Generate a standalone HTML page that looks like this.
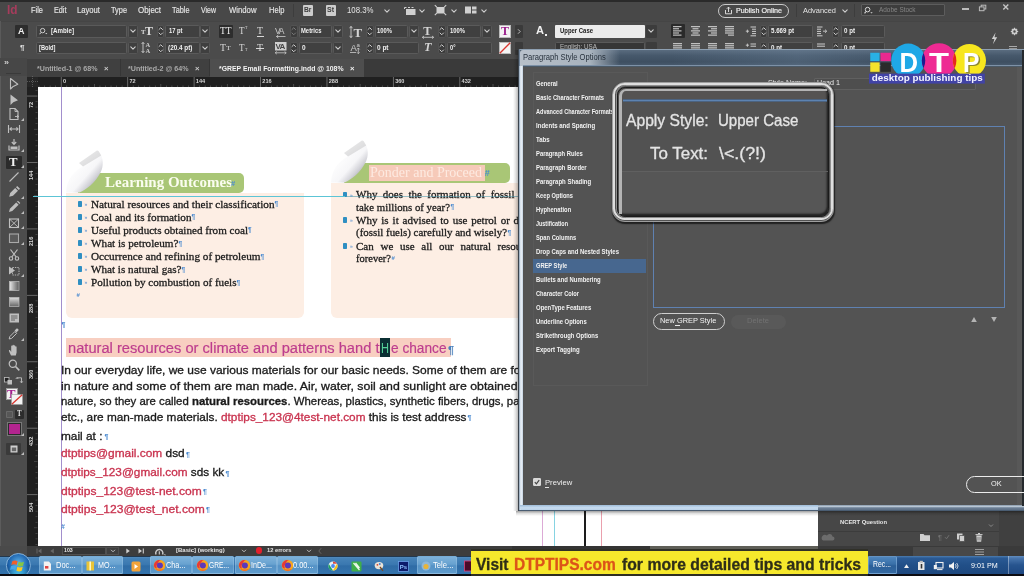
<!DOCTYPE html>
<html lang="en"><head><meta charset="utf-8"><title>GREP Email Formatting.indd - Paragraph Style Options</title>
<style>
html,body{margin:0;padding:0}
body{width:1024px;height:576px;overflow:hidden;position:relative;background:#4a4a4a;font-family:"Liberation Sans",sans-serif}
#r{filter:blur(0.45px);position:absolute;left:0;top:0;width:1024px;height:576px;overflow:hidden}
#r div,#r span,#r svg{position:absolute}
.t{white-space:nowrap;transform-origin:0 50%;display:block}
.c{overflow:hidden}
</style></head>
<body><div id="r">
<div style="left:0px;top:0px;width:1024px;height:576px;background:#4a4a4a;"></div>
<div style="left:0px;top:0px;width:1024px;height:21px;background:#484848;"></div>
<div style="left:0px;top:0px;width:1024px;height:1.5px;background:#2a2a2a;"></div>
<div style="left:0px;top:21px;width:1024px;height:38px;background:#4b4b4b;"></div>
<div style="left:0px;top:20.5px;width:1024px;height:1px;background:#454545;"></div>
<div style="left:0px;top:21px;width:1.2px;height:38px;background:#5a5a5a;"></div>
<div style="left:0px;top:59px;width:1024px;height:18px;background:#3a3a3a;"></div>
<div style="left:37px;top:87px;width:483px;height:459px;background:#ffffff;"></div>
<span class="t" style="transform:scaleX(0.9451);left:6.5px;top:2.2px;font-size:12.5px;line-height:16.2px;color:#a63c5c;font-family:'Liberation Sans', sans-serif;font-weight:700;">Id</span>
<span class="t" style="transform:scaleX(0.9089);left:31px;top:5.85px;font-size:8.2px;line-height:10.7px;color:#e4e4e4;font-family:'Liberation Sans', sans-serif;-webkit-text-stroke-width:0.15px;">File</span>
<span class="t" style="transform:scaleX(0.8859);left:53.5px;top:5.85px;font-size:8.2px;line-height:10.7px;color:#e4e4e4;font-family:'Liberation Sans', sans-serif;-webkit-text-stroke-width:0.15px;">Edit</span>
<span class="t" style="transform:scaleX(0.9352);left:77px;top:5.85px;font-size:8.2px;line-height:10.7px;color:#e4e4e4;font-family:'Liberation Sans', sans-serif;-webkit-text-stroke-width:0.15px;">Layout</span>
<span class="t" style="transform:scaleX(0.9014);left:111px;top:5.85px;font-size:8.2px;line-height:10.7px;color:#e4e4e4;font-family:'Liberation Sans', sans-serif;-webkit-text-stroke-width:0.15px;">Type</span>
<span class="t" style="transform:scaleX(0.9716);left:138px;top:5.85px;font-size:8.2px;line-height:10.7px;color:#e4e4e4;font-family:'Liberation Sans', sans-serif;-webkit-text-stroke-width:0.15px;">Object</span>
<span class="t" style="transform:scaleX(0.8939);left:171.5px;top:5.85px;font-size:8.2px;line-height:10.7px;color:#e4e4e4;font-family:'Liberation Sans', sans-serif;-webkit-text-stroke-width:0.15px;">Table</span>
<span class="t" style="transform:scaleX(0.8518);left:201px;top:5.85px;font-size:8.2px;line-height:10.7px;color:#e4e4e4;font-family:'Liberation Sans', sans-serif;-webkit-text-stroke-width:0.15px;">View</span>
<span class="t" style="transform:scaleX(0.9442);left:228.5px;top:5.85px;font-size:8.2px;line-height:10.7px;color:#e4e4e4;font-family:'Liberation Sans', sans-serif;-webkit-text-stroke-width:0.15px;">Window</span>
<span class="t" style="transform:scaleX(0.9202);left:268.5px;top:5.85px;font-size:8.2px;line-height:10.7px;color:#e4e4e4;font-family:'Liberation Sans', sans-serif;-webkit-text-stroke-width:0.15px;">Help</span>
<div style="left:293px;top:4px;width:1px;height:13px;background:#3d3d3d;"></div>
<div style="left:302.5px;top:5px;width:10.5px;height:10.5px;background:#cdcdcd;border-radius:1px;"></div>
<span class="t" style="transform:scaleX(1.0367);left:304px;top:6.15px;font-size:6.5px;line-height:8.5px;color:#3c3c3c;font-family:'Liberation Sans', sans-serif;font-weight:700;">Br</span>
<div style="left:325.5px;top:5px;width:10.5px;height:10.5px;background:#cdcdcd;border-radius:1px;"></div>
<span class="t" style="transform:scaleX(1.0769);left:327.3px;top:6.15px;font-size:6.5px;line-height:8.5px;color:#3c3c3c;font-family:'Liberation Sans', sans-serif;font-weight:700;">St</span>
<span class="t" style="transform:scaleX(0.9539);left:346.5px;top:5.65px;font-size:8.2px;line-height:10.7px;color:#e4e4e4;font-family:'Liberation Sans', sans-serif;">108.3%</span>
<svg style="left:382.5px;top:7.5px;" width="8" height="6" viewBox="0 0 8 6"><path d="M1.7999999999999998 1.9 L4 4.1 L6.2 1.9" fill="none" stroke="#cfcfcf" stroke-width="1.1" stroke-linecap="round" stroke-linejoin="round"/></svg>
<svg style="left:403px;top:4px;" width="14" height="12" viewBox="0 0 14 12"><path d="M1.5 3.5h2M5 3.5h2M8.5 3.5h2M1.5 3.5v1.5" stroke="#d0d0d0" stroke-width="1" fill="none"/><rect x="3" y="5" width="9.5" height="6" fill="#d0d0d0"/></svg>
<svg style="left:418px;top:7.5px;" width="8" height="6" viewBox="0 0 8 6"><path d="M1.7999999999999998 1.9 L4 4.1 L6.2 1.9" fill="none" stroke="#cfcfcf" stroke-width="1.1" stroke-linecap="round" stroke-linejoin="round"/></svg>
<svg style="left:434px;top:4px;" width="13" height="12" viewBox="0 0 13 12"><rect x="2.5" y="3" width="8" height="6.5" fill="#d0d0d0"/><path d="M0.8 1.2l2 2M12.2 1.2l-2 2M0.8 11.2l2-2M12.2 11.2l-2-2" stroke="#d0d0d0" stroke-width="1.1"/></svg>
<svg style="left:449.5px;top:7.5px;" width="8" height="6" viewBox="0 0 8 6"><path d="M1.7999999999999998 1.9 L4 4.1 L6.2 1.9" fill="none" stroke="#cfcfcf" stroke-width="1.1" stroke-linecap="round" stroke-linejoin="round"/></svg>
<svg style="left:464px;top:4px;" width="14" height="12" viewBox="0 0 14 12"><rect x="1" y="2.5" width="6" height="7" fill="#d0d0d0"/><rect x="8" y="2.5" width="4.5" height="3" fill="#d0d0d0"/><rect x="8" y="6.5" width="4.5" height="3" fill="#d0d0d0"/></svg>
<svg style="left:479.5px;top:7.5px;" width="8" height="6" viewBox="0 0 8 6"><path d="M1.7999999999999998 1.9 L4 4.1 L6.2 1.9" fill="none" stroke="#cfcfcf" stroke-width="1.1" stroke-linecap="round" stroke-linejoin="round"/></svg>
<div style="left:717.5px;top:3.5px;width:71px;height:14.5px;box-sizing:border-box;border:1px solid #c9c9c9;border-radius:8px;"></div>
<svg style="left:724px;top:6px;" width="9" height="9" viewBox="0 0 9 9"><path d="M1.5 4v3.8h6V4M4.5 6V1.2M2.8 2.8L4.5 1.1 6.2 2.8" fill="none" stroke="#e8e8e8" stroke-width="0.9"/></svg>
<span class="t" style="transform:scaleX(0.9394);left:736px;top:6.05px;font-size:7.6px;line-height:9.9px;color:#f0f0f0;font-family:'Liberation Sans', sans-serif;-webkit-text-stroke-width:0.2px;">Publish Online</span>
<div style="left:796px;top:4px;width:1px;height:13px;background:#3d3d3d;"></div>
<span class="t" style="transform:scaleX(0.9271);left:803px;top:5.8px;font-size:8px;line-height:10.4px;color:#e4e4e4;font-family:'Liberation Sans', sans-serif;">Advanced</span>
<svg style="left:841px;top:8px;" width="8" height="6" viewBox="0 0 8 6"><path d="M1.7999999999999998 1.9 L4 4.1 L6.2 1.9" fill="none" stroke="#cfcfcf" stroke-width="1.1" stroke-linecap="round" stroke-linejoin="round"/></svg>
<div style="left:854px;top:4px;width:1px;height:13px;background:#3d3d3d;"></div>
<div style="left:861px;top:4px;width:84px;height:11.5px;background:#3d3d3d;box-sizing:border-box;border:1px solid #5d5d5d;border-radius:1px;"></div>
<svg style="left:864px;top:5.5px;" width="10" height="9" viewBox="0 0 10 9"><circle cx="3.6" cy="3.6" r="2.3" fill="none" stroke="#d8d8d8" stroke-width="1"/><path d="M1.8 5.6L0.6 7.4" stroke="#d8d8d8" stroke-width="1.1"/><path d="M6.3 6.3h2.4l-1.2 1.3z" fill="#d8d8d8"/></svg>
<span class="t" style="transform:scaleX(0.9762);left:879px;top:5.7px;font-size:6.6px;line-height:8.6px;color:#858585;font-family:'Liberation Sans', sans-serif;">Adobe Stock</span>
<div style="left:962px;top:8.3px;width:6.5px;height:1.8px;background:#bcbcbc;"></div>
<svg style="left:978px;top:3.5px;" width="10" height="9" viewBox="0 0 10 9"><rect x="3.2" y="1.2" width="4.6" height="3.8" fill="none" stroke="#bcbcbc" stroke-width="1"/><rect x="1.4" y="2.9" width="4.6" height="3.8" fill="#484848" stroke="#bcbcbc" stroke-width="1"/></svg>
<svg style="left:1001px;top:3px;" width="10" height="9" viewBox="0 0 10 9"><path d="M2.3 1.6L7.3 6.6M7.3 1.6L2.3 6.6" stroke="#c6c6c6" stroke-width="1.4"/></svg>
<div style="left:14.5px;top:24.5px;width:13.5px;height:13.5px;background:#2d2d2d;border-radius:1px;"></div>
<span class="t" style="transform:scaleX(0.9455);left:18px;top:25.15px;font-size:9.5px;line-height:12.3px;color:#f0f0f0;font-family:'Liberation Sans', sans-serif;font-weight:700;">A</span>
<span class="t" style="transform:scaleX(1.0105);left:19.5px;top:42.6px;font-size:8px;line-height:10.4px;color:#e0e0e0;font-family:'Liberation Sans', sans-serif;font-weight:700;">¶</span>
<div style="left:36px;top:25px;width:90.5px;height:12.5px;background:#404040;box-sizing:border-box;border:1px solid #5a5a5a;border-radius:1.5px;"></div>
<svg style="left:39px;top:27px;" width="10" height="9" viewBox="0 0 10 9"><circle cx="3.6" cy="3.6" r="2.2" fill="none" stroke="#d8d8d8" stroke-width="0.9"/><path d="M1.9 5.5L0.7 7.2" stroke="#d8d8d8" stroke-width="1"/><path d="M6.2 6.0h2.2l-1.1 1.2z" fill="#d8d8d8"/></svg>
<span class="t" style="transform:scaleX(0.9665);left:51px;top:27.05px;font-size:6.4px;line-height:8.3px;color:#f0f0f0;font-family:'Liberation Sans', sans-serif;font-weight:700;">[Amble]</span>
<div style="left:127.5px;top:25px;width:10px;height:12.5px;background:#3f3f3f;box-sizing:border-box;border:1px solid #565656;border-radius:1.5px;"></div>
<svg style="left:128.5px;top:28.25px;" width="8" height="6" viewBox="0 0 8 6"><path d="M1.7999999999999998 1.9 L4 4.1 L6.2 1.9" fill="none" stroke="#cfcfcf" stroke-width="1.1" stroke-linecap="round" stroke-linejoin="round"/></svg>
<div style="left:36px;top:41.5px;width:90.5px;height:12.5px;background:#404040;box-sizing:border-box;border:1px solid #5a5a5a;border-radius:1.5px;"></div>
<span class="t" style="transform:scaleX(0.8934);left:39px;top:43.55px;font-size:6.4px;line-height:8.3px;color:#f0f0f0;font-family:'Liberation Sans', sans-serif;font-weight:700;">[Bold]</span>
<div style="left:127.5px;top:41.5px;width:10px;height:12.5px;background:#3f3f3f;box-sizing:border-box;border:1px solid #565656;border-radius:1.5px;"></div>
<svg style="left:128.5px;top:44.75px;" width="8" height="6" viewBox="0 0 8 6"><path d="M1.7999999999999998 1.9 L4 4.1 L6.2 1.9" fill="none" stroke="#cfcfcf" stroke-width="1.1" stroke-linecap="round" stroke-linejoin="round"/></svg>
<span class="t" style="transform:scaleX(0.9632);left:141px;top:28.45px;font-size:7px;line-height:9.1px;color:#ddd;font-family:'Liberation Serif', serif;font-weight:700;">T</span>
<span class="t" style="transform:scaleX(0.9981);left:145px;top:23.7px;font-size:12px;line-height:15.6px;color:#ddd;font-family:'Liberation Serif', serif;font-weight:700;">T</span>
<div style="left:156.5px;top:25px;width:7.5px;height:12.5px;background:#3c3c3c;box-sizing:border-box;border:1px solid #525252;border-radius:2px;"></div>
<svg style="left:156.5px;top:25px;" width="7.5" height="12.5" viewBox="0 0 7.5 12.5"><path d="M1.95 4.55 L3.75 2.75 L5.55 4.55 M1.95 7.95 L3.75 9.75 L5.55 7.95" fill="none" stroke="#cfcfcf" stroke-width="1" stroke-linecap="round" stroke-linejoin="round"/></svg>
<div style="left:165px;top:25px;width:34.5px;height:12.5px;background:#404040;box-sizing:border-box;border:1px solid #5a5a5a;border-radius:1.5px;"></div>
<span class="t" style="transform:scaleX(0.9047);left:169px;top:27.05px;font-size:6.4px;line-height:8.3px;color:#f0f0f0;font-family:'Liberation Sans', sans-serif;font-weight:700;">17 pt</span>
<div style="left:200px;top:25px;width:10px;height:12.5px;background:#3f3f3f;box-sizing:border-box;border:1px solid #565656;border-radius:1.5px;"></div>
<svg style="left:201.0px;top:28.25px;" width="8" height="6" viewBox="0 0 8 6"><path d="M1.7999999999999998 1.9 L4 4.1 L6.2 1.9" fill="none" stroke="#cfcfcf" stroke-width="1.1" stroke-linecap="round" stroke-linejoin="round"/></svg>
<svg style="left:141px;top:41px;" width="13" height="13" viewBox="0 0 13 13"><path d="M2 1.5v10M0.6 3L2 1.3 3.4 3M0.6 10L2 11.7 3.4 10" stroke="#ccc" stroke-width="0.9" fill="none"/><text x="4.6" y="6.3" font-size="6.5" font-weight="700" fill="#ccc" font-family="Liberation Serif,serif">A</text><text x="4.6" y="12" font-size="6.5" font-weight="700" fill="#ccc" font-family="Liberation Serif,serif">A</text></svg>
<div style="left:156.5px;top:41.5px;width:7.5px;height:12.5px;background:#3c3c3c;box-sizing:border-box;border:1px solid #525252;border-radius:2px;"></div>
<svg style="left:156.5px;top:41.5px;" width="7.5" height="12.5" viewBox="0 0 7.5 12.5"><path d="M1.95 4.55 L3.75 2.75 L5.55 4.55 M1.95 7.95 L3.75 9.75 L5.55 7.95" fill="none" stroke="#cfcfcf" stroke-width="1" stroke-linecap="round" stroke-linejoin="round"/></svg>
<div style="left:165px;top:41.5px;width:34.5px;height:12.5px;background:#404040;box-sizing:border-box;border:1px solid #5a5a5a;border-radius:1.5px;"></div>
<span class="t" style="transform:scaleX(0.9994);left:168px;top:43.55px;font-size:6.4px;line-height:8.3px;color:#f0f0f0;font-family:'Liberation Sans', sans-serif;font-weight:700;">(20.4 pt)</span>
<div style="left:200px;top:41.5px;width:10px;height:12.5px;background:#3f3f3f;box-sizing:border-box;border:1px solid #565656;border-radius:1.5px;"></div>
<svg style="left:201.0px;top:44.75px;" width="8" height="6" viewBox="0 0 8 6"><path d="M1.7999999999999998 1.9 L4 4.1 L6.2 1.9" fill="none" stroke="#cfcfcf" stroke-width="1.1" stroke-linecap="round" stroke-linejoin="round"/></svg>
<div style="left:218.5px;top:24.5px;width:14.5px;height:13.5px;background:#2d2d2d;border-radius:1px;"></div>
<span class="t" style="transform:scaleX(0.9906);left:220px;top:25.15px;font-size:9.5px;line-height:12.3px;color:#f0f0f0;font-family:'Liberation Serif', serif;">TT</span>
<span class="t" style="transform:scaleX(0.9462);left:239px;top:25.15px;font-size:9.5px;line-height:12.3px;color:#d8d8d8;font-family:'Liberation Serif', serif;">T</span>
<span class="t" style="transform:scaleX(0.8727);left:244.6px;top:25.25px;font-size:4.5px;line-height:5.9px;color:#d8d8d8;font-family:'Liberation Serif', serif;">T</span>
<span class="t" style="transform:scaleX(1.0323);left:257px;top:25.15px;font-size:9.5px;line-height:12.3px;color:#d8d8d8;font-family:'Liberation Serif', serif;">T</span>
<div style="left:257px;top:36px;width:6.5px;height:0.8px;background:#d8d8d8;"></div>
<span class="t" style="transform:scaleX(1.0323);left:220px;top:41.65px;font-size:9.5px;line-height:12.3px;color:#d8d8d8;font-family:'Liberation Serif', serif;">T</span>
<span class="t" style="transform:scaleX(1.1212);left:226px;top:44.25px;font-size:7px;line-height:9.1px;color:#d8d8d8;font-family:'Liberation Serif', serif;">T</span>
<span class="t" style="transform:scaleX(0.9462);left:239px;top:41.65px;font-size:9.5px;line-height:12.3px;color:#d8d8d8;font-family:'Liberation Serif', serif;">T</span>
<span class="t" style="transform:scaleX(0.8727);left:244.6px;top:47.45px;font-size:4.5px;line-height:5.9px;color:#d8d8d8;font-family:'Liberation Serif', serif;">T</span>
<span class="t" style="transform:scaleX(1.0323);left:257px;top:41.65px;font-size:9.5px;line-height:12.3px;color:#d8d8d8;font-family:'Liberation Serif', serif;">T</span>
<div style="left:256.2px;top:47.6px;width:8px;height:0.8px;background:#d8d8d8;"></div>
<svg style="left:274px;top:24.5px;" width="14" height="14" viewBox="0 0 14 14"><text x="1" y="8.5" font-size="8.5" fill="#ccc" font-family="Liberation Sans,sans-serif" letter-spacing="-1.2">VA</text><path d="M2.5 11.5h9M4.3 10L2.5 11.5 4.3 13" stroke="#ccc" stroke-width="0.8" fill="none"/></svg>
<div style="left:290px;top:25px;width:7.5px;height:12.5px;background:#3c3c3c;box-sizing:border-box;border:1px solid #525252;border-radius:2px;"></div>
<svg style="left:290px;top:25px;" width="7.5" height="12.5" viewBox="0 0 7.5 12.5"><path d="M1.95 4.55 L3.75 2.75 L5.55 4.55 M1.95 7.95 L3.75 9.75 L5.55 7.95" fill="none" stroke="#7a7a7a" stroke-width="1" stroke-linecap="round" stroke-linejoin="round"/></svg>
<div style="left:298.5px;top:25px;width:33px;height:12.5px;background:#404040;box-sizing:border-box;border:1px solid #5a5a5a;border-radius:1.5px;"></div>
<span class="t" style="transform:scaleX(0.9156);left:301px;top:27.05px;font-size:6.4px;line-height:8.3px;color:#f0f0f0;font-family:'Liberation Sans', sans-serif;font-weight:700;">Metrics</span>
<div style="left:332.5px;top:25px;width:10px;height:12.5px;background:#3f3f3f;box-sizing:border-box;border:1px solid #565656;border-radius:1.5px;"></div>
<svg style="left:333.5px;top:28.25px;" width="8" height="6" viewBox="0 0 8 6"><path d="M1.7999999999999998 1.9 L4 4.1 L6.2 1.9" fill="none" stroke="#cfcfcf" stroke-width="1.1" stroke-linecap="round" stroke-linejoin="round"/></svg>
<svg style="left:274px;top:41px;" width="14" height="14" viewBox="0 0 14 14"><rect x="1" y="1" width="11.5" height="8.5" fill="#cfcfcf"/><text x="1.6" y="8.3" font-size="8" fill="#444" font-family="Liberation Sans,sans-serif" letter-spacing="-0.8" font-weight="700">VA</text><path d="M1.2 11.8h11M2.8 10.5L1.2 11.8 2.8 13.1M10.6 10.5l1.6 1.3-1.6 1.3" stroke="#ccc" stroke-width="0.8" fill="none"/></svg>
<div style="left:290px;top:41.5px;width:7.5px;height:12.5px;background:#3c3c3c;box-sizing:border-box;border:1px solid #525252;border-radius:2px;"></div>
<svg style="left:290px;top:41.5px;" width="7.5" height="12.5" viewBox="0 0 7.5 12.5"><path d="M1.95 4.55 L3.75 2.75 L5.55 4.55 M1.95 7.95 L3.75 9.75 L5.55 7.95" fill="none" stroke="#cfcfcf" stroke-width="1" stroke-linecap="round" stroke-linejoin="round"/></svg>
<div style="left:298.5px;top:41.5px;width:33px;height:12.5px;background:#404040;box-sizing:border-box;border:1px solid #5a5a5a;border-radius:1.5px;"></div>
<span class="t" style="transform:scaleX(1.0105);left:302px;top:43.55px;font-size:6.4px;line-height:8.3px;color:#f0f0f0;font-family:'Liberation Sans', sans-serif;font-weight:700;">0</span>
<div style="left:332.5px;top:41.5px;width:10px;height:12.5px;background:#3f3f3f;box-sizing:border-box;border:1px solid #565656;border-radius:1.5px;"></div>
<svg style="left:333.5px;top:44.75px;" width="8" height="6" viewBox="0 0 8 6"><path d="M1.7999999999999998 1.9 L4 4.1 L6.2 1.9" fill="none" stroke="#cfcfcf" stroke-width="1.1" stroke-linecap="round" stroke-linejoin="round"/></svg>
<svg style="left:349px;top:24.5px;" width="15" height="14" viewBox="0 0 15 14"><path d="M2 1.5v11M0.6 3.2L2 1.3 3.4 3.2M0.6 10.8L2 12.7 3.4 10.8" stroke="#ccc" stroke-width="0.9" fill="none"/><text x="4.5" y="12" font-size="13" font-weight="700" fill="#d4d4d4" font-family="Liberation Serif,serif">T</text></svg>
<div style="left:366px;top:25px;width:7.5px;height:12.5px;background:#3c3c3c;box-sizing:border-box;border:1px solid #525252;border-radius:2px;"></div>
<svg style="left:366px;top:25px;" width="7.5" height="12.5" viewBox="0 0 7.5 12.5"><path d="M1.95 4.55 L3.75 2.75 L5.55 4.55 M1.95 7.95 L3.75 9.75 L5.55 7.95" fill="none" stroke="#cfcfcf" stroke-width="1" stroke-linecap="round" stroke-linejoin="round"/></svg>
<div style="left:374.5px;top:25px;width:33px;height:12.5px;background:#404040;box-sizing:border-box;border:1px solid #5a5a5a;border-radius:1.5px;"></div>
<span class="t" style="transform:scaleX(0.9169);left:377px;top:27.05px;font-size:6.4px;line-height:8.3px;color:#f0f0f0;font-family:'Liberation Sans', sans-serif;font-weight:700;">100%</span>
<div style="left:408.5px;top:25px;width:10px;height:12.5px;background:#3f3f3f;box-sizing:border-box;border:1px solid #565656;border-radius:1.5px;"></div>
<svg style="left:409.5px;top:28.25px;" width="8" height="6" viewBox="0 0 8 6"><path d="M1.7999999999999998 1.9 L4 4.1 L6.2 1.9" fill="none" stroke="#cfcfcf" stroke-width="1.1" stroke-linecap="round" stroke-linejoin="round"/></svg>
<svg style="left:349px;top:41px;" width="15" height="14" viewBox="0 0 15 14"><text x="1.5" y="9.5" font-size="9.5" fill="#ccc" font-family="Liberation Sans,sans-serif">A</text><text x="7.6" y="6" font-size="6" fill="#ccc" font-family="Liberation Sans,sans-serif">a</text><path d="M9.3 7v5.5M8 8.4L9.3 7l1.3 1.4M8 11.3l1.3 1.4 1.3-1.4" stroke="#ccc" stroke-width="0.8" fill="none"/><path d="M1 11.5h6" stroke="#ccc" stroke-width="0.8"/></svg>
<div style="left:366px;top:41.5px;width:7.5px;height:12.5px;background:#3c3c3c;box-sizing:border-box;border:1px solid #525252;border-radius:2px;"></div>
<svg style="left:366px;top:41.5px;" width="7.5" height="12.5" viewBox="0 0 7.5 12.5"><path d="M1.95 4.55 L3.75 2.75 L5.55 4.55 M1.95 7.95 L3.75 9.75 L5.55 7.95" fill="none" stroke="#cfcfcf" stroke-width="1" stroke-linecap="round" stroke-linejoin="round"/></svg>
<div style="left:374.5px;top:41.5px;width:44px;height:12.5px;background:#404040;box-sizing:border-box;border:1px solid #5a5a5a;border-radius:1.5px;"></div>
<span class="t" style="transform:scaleX(1.0110);left:377px;top:43.55px;font-size:6.4px;line-height:8.3px;color:#f0f0f0;font-family:'Liberation Sans', sans-serif;font-weight:700;">0 pt</span>
<svg style="left:421px;top:24.5px;" width="15" height="14" viewBox="0 0 15 14"><text x="2.3" y="10" font-size="12.5" font-weight="700" fill="#d4d4d4" font-family="Liberation Serif,serif">T</text><path d="M1.5 12.3h11M3 11L1.3 12.3 3 13.6M11 11l1.7 1.3L11 13.6" stroke="#ccc" stroke-width="0.85" fill="none"/></svg>
<div style="left:438px;top:25px;width:7.5px;height:12.5px;background:#3c3c3c;box-sizing:border-box;border:1px solid #525252;border-radius:2px;"></div>
<svg style="left:438px;top:25px;" width="7.5" height="12.5" viewBox="0 0 7.5 12.5"><path d="M1.95 4.55 L3.75 2.75 L5.55 4.55 M1.95 7.95 L3.75 9.75 L5.55 7.95" fill="none" stroke="#cfcfcf" stroke-width="1" stroke-linecap="round" stroke-linejoin="round"/></svg>
<div style="left:447px;top:25px;width:33.5px;height:12.5px;background:#404040;box-sizing:border-box;border:1px solid #5a5a5a;border-radius:1.5px;"></div>
<span class="t" style="transform:scaleX(0.9169);left:450px;top:27.05px;font-size:6.4px;line-height:8.3px;color:#f0f0f0;font-family:'Liberation Sans', sans-serif;font-weight:700;">100%</span>
<div style="left:481.5px;top:25px;width:10px;height:12.5px;background:#3f3f3f;box-sizing:border-box;border:1px solid #565656;border-radius:1.5px;"></div>
<svg style="left:482.5px;top:28.25px;" width="8" height="6" viewBox="0 0 8 6"><path d="M1.7999999999999998 1.9 L4 4.1 L6.2 1.9" fill="none" stroke="#cfcfcf" stroke-width="1.1" stroke-linecap="round" stroke-linejoin="round"/></svg>
<span class="t" style="transform:scaleX(1.0667);left:424px;top:40.3px;font-size:11.5px;line-height:15.0px;color:#d4d4d4;font-family:'Liberation Serif', serif;font-weight:700;font-style:italic;">T</span>
<div style="left:438px;top:41.5px;width:7.5px;height:12.5px;background:#3c3c3c;box-sizing:border-box;border:1px solid #525252;border-radius:2px;"></div>
<svg style="left:438px;top:41.5px;" width="7.5" height="12.5" viewBox="0 0 7.5 12.5"><path d="M1.95 4.55 L3.75 2.75 L5.55 4.55 M1.95 7.95 L3.75 9.75 L5.55 7.95" fill="none" stroke="#cfcfcf" stroke-width="1" stroke-linecap="round" stroke-linejoin="round"/></svg>
<div style="left:447px;top:41.5px;width:44.5px;height:12.5px;background:#404040;box-sizing:border-box;border:1px solid #5a5a5a;border-radius:1.5px;"></div>
<span class="t" style="transform:scaleX(0.8980);left:450px;top:43.55px;font-size:6.4px;line-height:8.3px;color:#f0f0f0;font-family:'Liberation Sans', sans-serif;font-weight:700;">0°</span>
<div style="left:499px;top:25px;width:12px;height:12.5px;background:#f4f4f4;box-sizing:border-box;border:1px solid #bbb;"></div>
<span class="t" style="transform:scaleX(0.9981);left:501px;top:23.7px;font-size:12px;line-height:15.6px;color:#9a1f8c;font-family:'Liberation Serif', serif;font-weight:700;">T</span>
<svg style="left:499px;top:41.5px;" width="12" height="12" viewBox="0 0 12 12"><rect x="0.5" y="0.5" width="11" height="11" fill="#f4f4f4" stroke="#bbb"/><path d="M0.8 11.2L11.2 0.8" stroke="#d8362f" stroke-width="1.3"/></svg>
<div style="left:515px;top:24.5px;width:8px;height:13px;background:#3a3a3a;border-radius:1px;"></div>
<svg style="left:515px;top:24.5px;" width="8" height="13" viewBox="0 0 8 13"><path d="M3 4.3L5.2 6.5 3 8.7" fill="none" stroke="#bbb" stroke-width="1"/></svg>
<div style="left:515px;top:41.5px;width:8px;height:13px;background:#3a3a3a;border-radius:1px;"></div>
<span class="t" style="transform:scaleX(1.0535);left:536px;top:24.45px;font-size:10.5px;line-height:13.7px;color:#f0f0f0;font-family:'Liberation Sans', sans-serif;font-weight:700;">A</span>
<div style="left:545px;top:34px;width:2px;height:2px;background:#f0f0f0;"></div>
<div style="left:554.5px;top:24.5px;width:90px;height:13px;background:#ececec;border-radius:1px;"></div>
<span class="t" style="transform:scaleX(0.9135);left:559.5px;top:26.95px;font-size:6.5px;line-height:8.5px;color:#222;font-family:'Liberation Sans', sans-serif;font-weight:700;">Upper Case</span>
<div style="left:646px;top:24.5px;width:10.5px;height:13px;background:#3c3c3c;border-radius:1px;"></div>
<svg style="left:647.2px;top:28.2px;" width="8" height="6" viewBox="0 0 8 6"><path d="M1.7999999999999998 1.9 L4 4.1 L6.2 1.9" fill="none" stroke="#cfcfcf" stroke-width="1.1" stroke-linecap="round" stroke-linejoin="round"/></svg>
<div style="left:554.5px;top:41.5px;width:90px;height:12.5px;background:#363636;box-sizing:border-box;border:1px solid #5a5a5a;border-radius:1.5px;"></div>
<span class="t" style="transform:scaleX(0.9661);left:559.5px;top:43.25px;font-size:6.5px;line-height:8.5px;color:#bdbdbd;font-family:'Liberation Sans', sans-serif;">English: USA</span>
<div style="left:646px;top:41.5px;width:10.5px;height:13px;background:#3c3c3c;border-radius:1px;"></div>
<div style="left:671px;top:24px;width:13.5px;height:14px;background:#2a2a2a;border-radius:1px;"></div>
<svg style="left:671.3px;top:24px;" width="13" height="14" viewBox="0 0 13 14"><rect x="2" y="2.2" width="8.5" height="1" fill="#dedede"/><rect x="2" y="4.300000000000001" width="6" height="1" fill="#dedede"/><rect x="2" y="6.4" width="8.5" height="1" fill="#dedede"/><rect x="2" y="8.5" width="6" height="1" fill="#dedede"/><rect x="2" y="10.600000000000001" width="8.5" height="1" fill="#dedede"/></svg>
<svg style="left:689px;top:24px;" width="13" height="14" viewBox="0 0 13 14"><rect x="2" y="2.2" width="9" height="1" fill="#dedede"/><rect x="3.5" y="4.300000000000001" width="6" height="1" fill="#dedede"/><rect x="2" y="6.4" width="9" height="1" fill="#dedede"/><rect x="3.5" y="8.5" width="6" height="1" fill="#dedede"/><rect x="2" y="10.600000000000001" width="9" height="1" fill="#dedede"/></svg>
<svg style="left:706px;top:24px;" width="13" height="14" viewBox="0 0 13 14"><rect x="2" y="2.2" width="9" height="1" fill="#dedede"/><rect x="5" y="4.300000000000001" width="6" height="1" fill="#dedede"/><rect x="2" y="6.4" width="9" height="1" fill="#dedede"/><rect x="5" y="8.5" width="6" height="1" fill="#dedede"/><rect x="2" y="10.600000000000001" width="9" height="1" fill="#dedede"/></svg>
<svg style="left:723px;top:24px;" width="13" height="14" viewBox="0 0 13 14"><rect x="2" y="2.2" width="9" height="1" fill="#dedede"/><rect x="2" y="4.300000000000001" width="9" height="1" fill="#dedede"/><rect x="2" y="6.4" width="9" height="1" fill="#dedede"/><rect x="2" y="8.5" width="9" height="1" fill="#dedede"/><rect x="5" y="10.600000000000001" width="6" height="1" fill="#dedede"/></svg>
<svg style="left:671.3px;top:41px;" width="13" height="14" viewBox="0 0 13 14"><rect x="2" y="2.2" width="9" height="1" fill="#dedede"/><rect x="2" y="4.300000000000001" width="9" height="1" fill="#dedede"/><rect x="2" y="6.4" width="9" height="1" fill="#dedede"/><rect x="2" y="8.5" width="9" height="1" fill="#dedede"/><rect x="5" y="10.600000000000001" width="6" height="1" fill="#dedede"/></svg>
<svg style="left:689px;top:41px;" width="13" height="14" viewBox="0 0 13 14"><rect x="2" y="2.2" width="9" height="1" fill="#dedede"/><rect x="2" y="4.300000000000001" width="9" height="1" fill="#dedede"/><rect x="2" y="6.4" width="9" height="1" fill="#dedede"/><rect x="2" y="8.5" width="9" height="1" fill="#dedede"/><rect x="5" y="10.600000000000001" width="6" height="1" fill="#dedede"/></svg>
<svg style="left:706px;top:41px;" width="13" height="14" viewBox="0 0 13 14"><rect x="2" y="2.2" width="9" height="1" fill="#dedede"/><rect x="2" y="4.300000000000001" width="9" height="1" fill="#dedede"/><rect x="2" y="6.4" width="9" height="1" fill="#dedede"/><rect x="2" y="8.5" width="9" height="1" fill="#dedede"/><rect x="5" y="10.600000000000001" width="6" height="1" fill="#dedede"/></svg>
<svg style="left:723px;top:41px;" width="13" height="14" viewBox="0 0 13 14"><rect x="2" y="2.2" width="9" height="1" fill="#dedede"/><rect x="2" y="4.300000000000001" width="9" height="1" fill="#dedede"/><rect x="2" y="6.4" width="9" height="1" fill="#dedede"/><rect x="2" y="8.5" width="9" height="1" fill="#dedede"/><rect x="5" y="10.600000000000001" width="6" height="1" fill="#dedede"/></svg>
<svg style="left:745px;top:25px;" width="12" height="13" viewBox="0 0 12 13"><path d="M0.8 6.2h3.2M2.4 4.6v3.2" stroke="#ccc" stroke-width="0.9"/><rect x="5.5" y="1.5" width="5.5" height="1" fill="#ccc"/><rect x="7" y="3.7" width="4" height="1" fill="#ccc"/><rect x="7" y="5.9" width="4" height="1" fill="#ccc"/><rect x="7" y="8.1" width="4" height="1" fill="#ccc"/><rect x="5.5" y="10.3" width="5.5" height="1" fill="#ccc"/></svg>
<div style="left:759.5px;top:25px;width:7.5px;height:12.5px;background:#3c3c3c;box-sizing:border-box;border:1px solid #525252;border-radius:2px;"></div>
<svg style="left:759.5px;top:25px;" width="7.5" height="12.5" viewBox="0 0 7.5 12.5"><path d="M1.95 4.55 L3.75 2.75 L5.55 4.55 M1.95 7.95 L3.75 9.75 L5.55 7.95" fill="none" stroke="#cfcfcf" stroke-width="1" stroke-linecap="round" stroke-linejoin="round"/></svg>
<div style="left:768px;top:25px;width:45px;height:12.5px;background:#404040;box-sizing:border-box;border:1px solid #5a5a5a;border-radius:1.5px;"></div>
<span class="t" style="transform:scaleX(0.9659);left:771px;top:27.05px;font-size:6.4px;line-height:8.3px;color:#f0f0f0;font-family:'Liberation Sans', sans-serif;font-weight:700;">5.669 pt</span>
<svg style="left:816px;top:25px;" width="12" height="13" viewBox="0 0 12 13"><rect x="1" y="1.5" width="5.5" height="1" fill="#ccc"/><rect x="1" y="3.7" width="4" height="1" fill="#ccc"/><rect x="1" y="5.9" width="4" height="1" fill="#ccc"/><rect x="1" y="8.1" width="4" height="1" fill="#ccc"/><rect x="1" y="10.3" width="5.5" height="1" fill="#ccc"/><path d="M7 6.2h3.6M9 4.6l1.7 1.6L9 7.8" stroke="#ccc" stroke-width="0.9" fill="none"/></svg>
<div style="left:831.5px;top:25px;width:7.5px;height:12.5px;background:#3c3c3c;box-sizing:border-box;border:1px solid #525252;border-radius:2px;"></div>
<svg style="left:831.5px;top:25px;" width="7.5" height="12.5" viewBox="0 0 7.5 12.5"><path d="M1.95 4.55 L3.75 2.75 L5.55 4.55 M1.95 7.95 L3.75 9.75 L5.55 7.95" fill="none" stroke="#cfcfcf" stroke-width="1" stroke-linecap="round" stroke-linejoin="round"/></svg>
<div style="left:841px;top:25px;width:43.5px;height:12.5px;background:#404040;box-sizing:border-box;border:1px solid #5a5a5a;border-radius:1.5px;"></div>
<span class="t" style="transform:scaleX(0.9670);left:844px;top:27.05px;font-size:6.4px;line-height:8.3px;color:#f0f0f0;font-family:'Liberation Sans', sans-serif;font-weight:700;">0 pt</span>
<svg style="left:745px;top:41.5px;" width="12" height="13" viewBox="0 0 12 13"><path d="M0.8 3.2h3.2M2.4 1.6v3.2" stroke="#ccc" stroke-width="0.9"/><rect x="5.5" y="1.5" width="5.5" height="1" fill="#ccc"/><rect x="5.5" y="3.7" width="5.5" height="1" fill="#ccc"/></svg>
<div style="left:759.5px;top:41.5px;width:7.5px;height:12.5px;background:#3c3c3c;box-sizing:border-box;border:1px solid #525252;border-radius:2px;"></div>
<svg style="left:759.5px;top:41.5px;" width="7.5" height="12.5" viewBox="0 0 7.5 12.5"><path d="M1.95 4.55 L3.75 2.75 L5.55 4.55 M1.95 7.95 L3.75 9.75 L5.55 7.95" fill="none" stroke="#cfcfcf" stroke-width="1" stroke-linecap="round" stroke-linejoin="round"/></svg>
<div style="left:768px;top:41.5px;width:45px;height:12.5px;background:#404040;box-sizing:border-box;border:1px solid #5a5a5a;border-radius:1.5px;"></div>
<span class="t" style="transform:scaleX(0.9670);left:771px;top:43.55px;font-size:6.4px;line-height:8.3px;color:#f0f0f0;font-family:'Liberation Sans', sans-serif;font-weight:700;">0 pt</span>
<svg style="left:816px;top:41.5px;" width="12" height="13" viewBox="0 0 12 13"><rect x="1" y="1.5" width="8" height="1" fill="#ccc"/><rect x="1" y="3.7" width="8" height="1" fill="#ccc"/></svg>
<div style="left:831.5px;top:41.5px;width:7.5px;height:12.5px;background:#3c3c3c;box-sizing:border-box;border:1px solid #525252;border-radius:2px;"></div>
<svg style="left:831.5px;top:41.5px;" width="7.5" height="12.5" viewBox="0 0 7.5 12.5"><path d="M1.95 4.55 L3.75 2.75 L5.55 4.55 M1.95 7.95 L3.75 9.75 L5.55 7.95" fill="none" stroke="#cfcfcf" stroke-width="1" stroke-linecap="round" stroke-linejoin="round"/></svg>
<div style="left:841px;top:41.5px;width:43.5px;height:12.5px;background:#404040;box-sizing:border-box;border:1px solid #5a5a5a;border-radius:1.5px;"></div>
<span class="t" style="transform:scaleX(0.9670);left:844px;top:43.55px;font-size:6.4px;line-height:8.3px;color:#f0f0f0;font-family:'Liberation Sans', sans-serif;font-weight:700;">0 pt</span>
<svg style="left:990px;top:32px;" width="9" height="13" viewBox="0 0 9 13"><path d="M5.6 0.6L1.8 7h2.6L2.9 12.2 7.2 5.2H4.5z" fill="#d0d0d0"/></svg>
<svg style="left:1009.5px;top:26.5px;" width="9" height="9" viewBox="0 0 9 9"><circle cx="4.5" cy="4.5" r="2.1" fill="none" stroke="#cdcdcd" stroke-width="1.7"/><path d="M4.5 0.8v1.3M4.5 6.9v1.3M0.8 4.5h1.3M6.9 4.5h1.3M1.9 1.9l0.9 0.9M6.2 6.2l0.9 0.9M1.9 7.1l0.9-0.9M6.2 2.8l0.9-0.9" stroke="#cdcdcd" stroke-width="1.1"/></svg>
<svg style="left:1008px;top:45px;" width="10" height="8" viewBox="0 0 10 8"><rect x="1" y="1" width="8" height="1" fill="#aaa"/><rect x="1" y="3.2" width="8" height="1" fill="#aaa"/><rect x="1" y="5.4" width="8" height="1" fill="#aaa"/></svg>
<div style="left:27px;top:59px;width:183px;height:17.5px;background:#404040;"></div>
<div style="left:209.5px;top:59px;width:154px;height:17.5px;background:#4e4e4e;"></div>
<div style="left:363.5px;top:59px;width:661px;height:17.5px;background:#3a3a3a;"></div>
<div style="left:120px;top:59px;width:1px;height:17px;background:#363636;"></div>
<div style="left:209px;top:59px;width:1px;height:17px;background:#363636;"></div>
<span class="t" style="transform:scaleX(1.0753);left:37px;top:64.9px;font-size:6.6px;line-height:8.6px;color:#a9a9a9;font-family:'Liberation Sans', sans-serif;font-weight:700;">*Untitled-1 @ 68%</span>
<span class="t" style="transform:scaleX(0.9632);left:104px;top:63.7px;font-size:8px;line-height:10.4px;color:#c8c8c8;font-family:'Liberation Sans', sans-serif;font-weight:700;">×</span>
<span class="t" style="transform:scaleX(1.0753);left:128px;top:64.9px;font-size:6.6px;line-height:8.6px;color:#a9a9a9;font-family:'Liberation Sans', sans-serif;font-weight:700;">*Untitled-2 @ 64%</span>
<span class="t" style="transform:scaleX(0.9632);left:195px;top:63.7px;font-size:8px;line-height:10.4px;color:#c8c8c8;font-family:'Liberation Sans', sans-serif;font-weight:700;">×</span>
<span class="t" style="transform:scaleX(1.0104);left:219px;top:64.8px;font-size:6.8px;line-height:8.8px;color:#f4f4f4;font-family:'Liberation Sans', sans-serif;font-weight:700;">*GREP Email Formatting.indd @ 108%</span>
<span class="t" style="transform:scaleX(0.9632);left:349.5px;top:63.7px;font-size:8px;line-height:10.4px;color:#f0f0f0;font-family:'Liberation Sans', sans-serif;font-weight:700;">×</span>
<div style="left:27px;top:76.5px;width:493px;height:10.5px;background:#202020;"></div>
<div style="left:27px;top:76.5px;width:10.5px;height:10.5px;background:#262626;"></div>
<svg style="left:27px;top:76px;" width="11" height="11" viewBox="0 0 11 11"><path d="M5.5 0v11M0 5.5h11" stroke="#777" stroke-width="0.6" stroke-dasharray="1 1"/></svg>
<svg style="left:0px;top:76.5px;" width="520" height="10.5" viewBox="0 0 520 10.5"><rect x="38.71" y="8.5" width="0.7" height="2" fill="#606060"/><rect x="44.24" y="8.5" width="0.7" height="2" fill="#606060"/><rect x="49.78" y="8.5" width="0.7" height="2" fill="#606060"/><rect x="55.31" y="8.5" width="0.7" height="2" fill="#606060"/><rect x="60.80" y="0" width="0.9" height="11" fill="#707070"/><rect x="66.39" y="8.5" width="0.7" height="2" fill="#606060"/><rect x="71.92" y="8.5" width="0.7" height="2" fill="#606060"/><rect x="77.46" y="8.5" width="0.7" height="2" fill="#606060"/><rect x="82.99" y="8.5" width="0.7" height="2" fill="#606060"/><rect x="88.53" y="8.5" width="0.7" height="2" fill="#606060"/><rect x="94.07" y="7.0" width="0.7" height="3.5" fill="#606060"/><rect x="99.60" y="8.5" width="0.7" height="2" fill="#606060"/><rect x="105.14" y="8.5" width="0.7" height="2" fill="#606060"/><rect x="110.67" y="8.5" width="0.7" height="2" fill="#606060"/><rect x="116.21" y="8.5" width="0.7" height="2" fill="#606060"/><rect x="121.74" y="8.5" width="0.7" height="2" fill="#606060"/><rect x="127.23" y="0" width="0.9" height="11" fill="#707070"/><rect x="132.82" y="8.5" width="0.7" height="2" fill="#606060"/><rect x="138.35" y="8.5" width="0.7" height="2" fill="#606060"/><rect x="143.89" y="8.5" width="0.7" height="2" fill="#606060"/><rect x="149.42" y="8.5" width="0.7" height="2" fill="#606060"/><rect x="154.96" y="8.5" width="0.7" height="2" fill="#606060"/><rect x="160.50" y="7.0" width="0.7" height="3.5" fill="#606060"/><rect x="166.03" y="8.5" width="0.7" height="2" fill="#606060"/><rect x="171.57" y="8.5" width="0.7" height="2" fill="#606060"/><rect x="177.10" y="8.5" width="0.7" height="2" fill="#606060"/><rect x="182.64" y="8.5" width="0.7" height="2" fill="#606060"/><rect x="188.17" y="8.5" width="0.7" height="2" fill="#606060"/><rect x="193.66" y="0" width="0.9" height="11" fill="#707070"/><rect x="199.25" y="8.5" width="0.7" height="2" fill="#606060"/><rect x="204.78" y="8.5" width="0.7" height="2" fill="#606060"/><rect x="210.32" y="8.5" width="0.7" height="2" fill="#606060"/><rect x="215.85" y="8.5" width="0.7" height="2" fill="#606060"/><rect x="221.39" y="8.5" width="0.7" height="2" fill="#606060"/><rect x="226.93" y="7.0" width="0.7" height="3.5" fill="#606060"/><rect x="232.46" y="8.5" width="0.7" height="2" fill="#606060"/><rect x="238.00" y="8.5" width="0.7" height="2" fill="#606060"/><rect x="243.53" y="8.5" width="0.7" height="2" fill="#606060"/><rect x="249.07" y="8.5" width="0.7" height="2" fill="#606060"/><rect x="254.60" y="8.5" width="0.7" height="2" fill="#606060"/><rect x="260.09" y="0" width="0.9" height="11" fill="#707070"/><rect x="265.68" y="8.5" width="0.7" height="2" fill="#606060"/><rect x="271.21" y="8.5" width="0.7" height="2" fill="#606060"/><rect x="276.75" y="8.5" width="0.7" height="2" fill="#606060"/><rect x="282.28" y="8.5" width="0.7" height="2" fill="#606060"/><rect x="287.82" y="8.5" width="0.7" height="2" fill="#606060"/><rect x="293.36" y="7.0" width="0.7" height="3.5" fill="#606060"/><rect x="298.89" y="8.5" width="0.7" height="2" fill="#606060"/><rect x="304.43" y="8.5" width="0.7" height="2" fill="#606060"/><rect x="309.96" y="8.5" width="0.7" height="2" fill="#606060"/><rect x="315.50" y="8.5" width="0.7" height="2" fill="#606060"/><rect x="321.03" y="8.5" width="0.7" height="2" fill="#606060"/><rect x="326.52" y="0" width="0.9" height="11" fill="#707070"/><rect x="332.11" y="8.5" width="0.7" height="2" fill="#606060"/><rect x="337.64" y="8.5" width="0.7" height="2" fill="#606060"/><rect x="343.18" y="8.5" width="0.7" height="2" fill="#606060"/><rect x="348.71" y="8.5" width="0.7" height="2" fill="#606060"/><rect x="354.25" y="8.5" width="0.7" height="2" fill="#606060"/><rect x="359.78" y="7.0" width="0.7" height="3.5" fill="#606060"/><rect x="365.32" y="8.5" width="0.7" height="2" fill="#606060"/><rect x="370.86" y="8.5" width="0.7" height="2" fill="#606060"/><rect x="376.39" y="8.5" width="0.7" height="2" fill="#606060"/><rect x="381.93" y="8.5" width="0.7" height="2" fill="#606060"/><rect x="387.46" y="8.5" width="0.7" height="2" fill="#606060"/><rect x="392.95" y="0" width="0.9" height="11" fill="#707070"/><rect x="398.54" y="8.5" width="0.7" height="2" fill="#606060"/><rect x="404.07" y="8.5" width="0.7" height="2" fill="#606060"/><rect x="409.61" y="8.5" width="0.7" height="2" fill="#606060"/><rect x="415.14" y="8.5" width="0.7" height="2" fill="#606060"/><rect x="420.68" y="8.5" width="0.7" height="2" fill="#606060"/><rect x="426.22" y="7.0" width="0.7" height="3.5" fill="#606060"/><rect x="431.75" y="8.5" width="0.7" height="2" fill="#606060"/><rect x="437.29" y="8.5" width="0.7" height="2" fill="#606060"/><rect x="442.82" y="8.5" width="0.7" height="2" fill="#606060"/><rect x="448.36" y="8.5" width="0.7" height="2" fill="#606060"/><rect x="453.89" y="8.5" width="0.7" height="2" fill="#606060"/><rect x="459.38" y="0" width="0.9" height="11" fill="#707070"/><rect x="464.97" y="8.5" width="0.7" height="2" fill="#606060"/><rect x="470.50" y="8.5" width="0.7" height="2" fill="#606060"/><rect x="476.04" y="8.5" width="0.7" height="2" fill="#606060"/><rect x="481.57" y="8.5" width="0.7" height="2" fill="#606060"/><rect x="487.11" y="8.5" width="0.7" height="2" fill="#606060"/><rect x="492.64" y="7.0" width="0.7" height="3.5" fill="#606060"/><rect x="498.18" y="8.5" width="0.7" height="2" fill="#606060"/><rect x="503.72" y="8.5" width="0.7" height="2" fill="#606060"/><rect x="509.25" y="8.5" width="0.7" height="2" fill="#606060"/><rect x="514.79" y="8.5" width="0.7" height="2" fill="#606060"/><rect x="525.81" y="0" width="0.9" height="11" fill="#707070"/></svg>
<span class="t" style="left:63.0px;top:77.95px;font-size:5.6px;line-height:7.3px;color:#d6d6d6;font-family:'Liberation Sans', sans-serif;font-weight:700;">0</span>
<span class="t" style="left:129.43px;top:77.95px;font-size:5.6px;line-height:7.3px;color:#d6d6d6;font-family:'Liberation Sans', sans-serif;font-weight:700;">72</span>
<span class="t" style="left:195.86px;top:77.95px;font-size:5.6px;line-height:7.3px;color:#d6d6d6;font-family:'Liberation Sans', sans-serif;font-weight:700;">144</span>
<span class="t" style="left:262.29px;top:77.95px;font-size:5.6px;line-height:7.3px;color:#d6d6d6;font-family:'Liberation Sans', sans-serif;font-weight:700;">216</span>
<span class="t" style="left:328.72px;top:77.95px;font-size:5.6px;line-height:7.3px;color:#d6d6d6;font-family:'Liberation Sans', sans-serif;font-weight:700;">288</span>
<span class="t" style="left:395.15000000000003px;top:77.95px;font-size:5.6px;line-height:7.3px;color:#d6d6d6;font-family:'Liberation Sans', sans-serif;font-weight:700;">360</span>
<span class="t" style="left:461.58000000000004px;top:77.95px;font-size:5.6px;line-height:7.3px;color:#d6d6d6;font-family:'Liberation Sans', sans-serif;font-weight:700;">432</span>
<div style="left:0px;top:58px;width:27px;height:488px;background:#4c4c4c;"></div>
<div style="left:0px;top:58px;width:1.2px;height:488px;background:#5c5c5c;"></div>
<div style="left:0px;top:58px;width:27px;height:18px;background:#474747;"></div>
<span class="t" style="transform:scaleX(1.2800);left:4px;top:57.75px;font-size:7px;line-height:9.1px;color:#cfcfcf;font-family:'Liberation Sans', sans-serif;font-weight:700;">»</span>
<div style="left:6px;top:72.5px;width:15px;height:1px;background:#3a3a3a;"></div>
<div style="left:5.5px;top:155.5px;width:16.5px;height:13px;background:#2b2b2b;border-radius:1px;"></div>
<svg style="left:5.5px;top:76.0px;" width="16" height="16" viewBox="0 0 16 16"><path d="M4.5 2.5L4.5 13 7.2 10.4 11.8 8.3z" fill="none" stroke="#bfbfbf" stroke-width="1.1" stroke-linejoin="round"/></svg>
<svg style="left:5.5px;top:91.5px;" width="16" height="16" viewBox="0 0 16 16"><path d="M4.5 2.5L4.5 13 7.3 10.3 12 8.3z" fill="#bfbfbf"/></svg>
<svg style="left:5.5px;top:106.0px;" width="16" height="16" viewBox="0 0 16 16"><path d="M4 2.5h5l3 3v8H4z" fill="none" stroke="#bfbfbf" stroke-width="1.1"/><path d="M9 2.5v3h3" fill="none" stroke="#bfbfbf" stroke-width="0.9"/><path d="M9 10.5l3.5 0M11 9l1.7 1.5L11 12" stroke="#bfbfbf" stroke-width="0.9" fill="none"/></svg>
<svg style="left:21px;top:118px;" width="3" height="3" viewBox="0 0 3 3"><path d="M3 0V3H0z" fill="#bdbdbd"/></svg>
<svg style="left:5.5px;top:121.0px;" width="16" height="16" viewBox="0 0 16 16"><path d="M2.5 4v8M13.5 4v8M4 8h8M5.6 6.4L4 8l1.6 1.6M10.4 6.4L12 8l-1.6 1.6" fill="none" stroke="#bfbfbf" stroke-width="1.1"/></svg>
<svg style="left:5.5px;top:137.0px;" width="16" height="16" viewBox="0 0 16 16"><path d="M3 8.5v4.5h10V8.5" fill="none" stroke="#bfbfbf" stroke-width="1.2"/><rect x="4.5" y="9.5" width="7" height="2.5" fill="#bfbfbf"/><path d="M8 2v5M5.8 5L8 7.4 10.2 5" fill="none" stroke="#bfbfbf" stroke-width="1.2"/></svg>
<svg style="left:21px;top:149px;" width="3" height="3" viewBox="0 0 3 3"><path d="M3 0V3H0z" fill="#bdbdbd"/></svg>
<span class="t" style="transform:scaleX(1.0187);left:9.3px;top:153.5px;font-size:12.5px;line-height:16.2px;color:#f2f2f2;font-family:'Liberation Serif', serif;font-weight:700;">T</span>
<svg style="left:21px;top:165px;" width="3" height="3" viewBox="0 0 3 3"><path d="M3 0V3H0z" fill="#bdbdbd"/></svg>
<svg style="left:5.5px;top:168.5px;" width="16" height="16" viewBox="0 0 16 16"><path d="M3.5 12.5L12.5 3.5" stroke="#bfbfbf" stroke-width="1.1"/></svg>
<svg style="left:5.5px;top:184.0px;" width="16" height="16" viewBox="0 0 16 16"><path d="M3.2 12.8l1-3.8 5-5 2.8 2.8-5 5z" fill="#bfbfbf"/><path d="M10 3.2l1.2-1.2 2.8 2.8-1.2 1.2z" fill="#bfbfbf"/></svg>
<svg style="left:21px;top:196px;" width="3" height="3" viewBox="0 0 3 3"><path d="M3 0V3H0z" fill="#bdbdbd"/></svg>
<svg style="left:5.5px;top:199.0px;" width="16" height="16" viewBox="0 0 16 16"><path d="M3 13l0.9-3.3 6.3-6.3 2.4 2.4-6.3 6.3z" fill="#bfbfbf"/><path d="M11 2.6l0.9-0.9 2.4 2.4-0.9 0.9z" fill="#bfbfbf"/></svg>
<svg style="left:21px;top:211px;" width="3" height="3" viewBox="0 0 3 3"><path d="M3 0V3H0z" fill="#bdbdbd"/></svg>
<svg style="left:5.5px;top:214.5px;" width="16" height="16" viewBox="0 0 16 16"><rect x="3.5" y="4" width="9" height="8.5" fill="none" stroke="#bfbfbf" stroke-width="1.1"/><path d="M3.5 4l9 8.5M12.5 4l-9 8.5" stroke="#bfbfbf" stroke-width="0.9"/></svg>
<svg style="left:21px;top:226px;" width="3" height="3" viewBox="0 0 3 3"><path d="M3 0V3H0z" fill="#bdbdbd"/></svg>
<svg style="left:5.5px;top:230.0px;" width="16" height="16" viewBox="0 0 16 16"><rect x="3.5" y="4" width="9" height="8.5" fill="#5a5a5a" stroke="#a9a9a9" stroke-width="1.1"/></svg>
<svg style="left:21px;top:242px;" width="3" height="3" viewBox="0 0 3 3"><path d="M3 0V3H0z" fill="#bdbdbd"/></svg>
<svg style="left:5.5px;top:247.0px;" width="16" height="16" viewBox="0 0 16 16"><circle cx="5" cy="11.5" r="1.7" fill="none" stroke="#bfbfbf" stroke-width="1.1"/><circle cx="11" cy="11.5" r="1.7" fill="none" stroke="#bfbfbf" stroke-width="1.1"/><path d="M5.8 10L11.5 2.5M10.2 10L4.5 2.5" stroke="#bfbfbf" stroke-width="1.2"/></svg>
<svg style="left:5.5px;top:262.5px;" width="16" height="16" viewBox="0 0 16 16"><path d="M3 3.5l6 4-6 4z" fill="#bfbfbf"/><rect x="6.5" y="4.5" width="6.5" height="7.5" fill="none" stroke="#bfbfbf" stroke-width="0.9" stroke-dasharray="1.4 1"/></svg>
<svg style="left:21px;top:274px;" width="3" height="3" viewBox="0 0 3 3"><path d="M3 0V3H0z" fill="#bdbdbd"/></svg>
<svg style="left:5.5px;top:278.0px;" width="16" height="16" viewBox="0 0 16 16"><defs><linearGradient id="gs1" x1="0" x2="1"><stop offset="0" stop-color="#e8e8e8"/><stop offset="1" stop-color="#5a5a5a"/></linearGradient></defs><rect x="3.5" y="3.5" width="9.5" height="9" fill="url(#gs1)" stroke="#bdbdbd" stroke-width="0.7"/></svg>
<svg style="left:5.5px;top:293.5px;" width="16" height="16" viewBox="0 0 16 16"><defs><linearGradient id="gs2" x1="0" x2="0" y1="0" y2="1"><stop offset="0" stop-color="#dcdcdc"/><stop offset="1" stop-color="#666"/></linearGradient></defs><rect x="3.5" y="3.5" width="9.5" height="9" fill="url(#gs2)" stroke="#bdbdbd" stroke-width="0.7"/></svg>
<svg style="left:5.5px;top:310.0px;" width="16" height="16" viewBox="0 0 16 16"><rect x="3.5" y="3.5" width="9.5" height="9" fill="#bfbfbf"/><path d="M5 6h6.5M5 8h6.5M5 10h4" stroke="#4c4c4c" stroke-width="0.8"/></svg>
<svg style="left:5.5px;top:326.0px;" width="16" height="16" viewBox="0 0 16 16"><path d="M3.2 13l0.6-2.4 5-5 1.8 1.8-5 5z" fill="none" stroke="#bfbfbf" stroke-width="1"/><path d="M8.6 4.6l2-2c0.8-0.8 2.6 1 1.8 1.8l-2 2z" fill="#bfbfbf"/></svg>
<svg style="left:21px;top:338px;" width="3" height="3" viewBox="0 0 3 3"><path d="M3 0V3H0z" fill="#bdbdbd"/></svg>
<svg style="left:5.5px;top:341.5px;" width="16" height="16" viewBox="0 0 16 16"><path d="M5 13.5L3 9.2c-0.4-1 0.8-1.5 1.3-0.7L5.2 10V4.2c0-0.9 1.3-0.9 1.3 0V3.3c0-0.9 1.4-0.9 1.4 0v0.6c0-0.9 1.4-0.9 1.4 0v1c0-0.9 1.3-0.9 1.3 0V10.5l-0.8 3z" fill="#bfbfbf"/></svg>
<svg style="left:5.5px;top:356.5px;" width="16" height="16" viewBox="0 0 16 16"><circle cx="6.8" cy="6.8" r="3.6" fill="none" stroke="#bfbfbf" stroke-width="1.2"/><path d="M9.5 9.5L13.3 13.3" stroke="#bfbfbf" stroke-width="1.7"/></svg>
<svg style="left:4px;top:376.5px;" width="9" height="8" viewBox="0 0 9 8"><rect x="0.5" y="0.5" width="4.5" height="4.5" fill="#222" stroke="#bfbfbf" stroke-width="0.8"/><rect x="3.5" y="3" width="4.5" height="4.5" fill="#bfbfbf"/></svg>
<svg style="left:15px;top:376px;" width="9" height="9" viewBox="0 0 9 9"><path d="M2 1.8h4.5v4.7M0.8 3L2 1.5 3.2 3M5.3 5.4l1.2 1.5 1.2-1.5" fill="none" stroke="#bfbfbf" stroke-width="0.9"/></svg>
<div style="left:5.5px;top:387.5px;width:12px;height:12px;background:#f2f2f2;box-sizing:border-box;border:0.6px solid #999;"></div>
<span class="t" style="transform:scaleX(1.0187);left:7px;top:385.6px;font-size:12.5px;line-height:16.2px;color:#a21f8e;font-family:'Liberation Serif', serif;font-weight:700;">T</span>
<svg style="left:11px;top:394px;" width="12" height="11" viewBox="0 0 12 11"><rect x="0.5" y="0.5" width="11" height="10" fill="#f4f4f4" stroke="#999" stroke-width="0.6"/><path d="M0.8 10.2L11.2 0.8" stroke="#d8362f" stroke-width="1.3"/></svg>
<svg style="left:5.5px;top:410.5px;" width="7" height="7" viewBox="0 0 7 7"><rect x="0.6" y="0.6" width="5.8" height="5.8" fill="#575757" stroke="#707070" stroke-width="0.8"/></svg>
<div style="left:15px;top:409.5px;width:9px;height:9px;background:#2c2c2c;border-radius:1px;"></div>
<span class="t" style="transform:scaleX(0.9171);left:17.3px;top:409.2px;font-size:7.5px;line-height:9.8px;color:#e6e6e6;font-family:'Liberation Serif', serif;font-weight:700;">T</span>
<div style="left:7.5px;top:423px;width:13px;height:12px;background:#b3248f;box-sizing:border-box;border:1px solid #2b2b2b;outline:0.6px solid #777;"></div>
<svg style="left:21px;top:433px;" width="3" height="3" viewBox="0 0 3 3"><path d="M3 0V3H0z" fill="#bdbdbd"/></svg>
<div style="left:6px;top:442.5px;width:15px;height:12px;background:#3a3a3a;border-radius:1px;"></div>
<svg style="left:9.5px;top:444.5px;" width="8" height="8" viewBox="0 0 8 8"><rect x="0.5" y="0.5" width="7" height="7" fill="#cfcfcf"/><rect x="1.8" y="2.5" width="4.4" height="3.7" fill="#666"/></svg>
<svg style="left:21px;top:452px;" width="3" height="3" viewBox="0 0 3 3"><path d="M3 0V3H0z" fill="#bdbdbd"/></svg>
<div style="left:27px;top:87px;width:10.5px;height:459px;background:#202020;"></div>
<svg style="left:27px;top:87px;" width="10.5" height="459" viewBox="0 0 10.5 459"><rect x="8.5" y="3.11" width="2" height="0.7" fill="#525252"/><rect x="0" y="8.60" width="10.5" height="0.9" fill="#707070"/><rect x="8.5" y="14.19" width="2" height="0.7" fill="#525252"/><rect x="8.5" y="19.72" width="2" height="0.7" fill="#525252"/><rect x="8.5" y="25.26" width="2" height="0.7" fill="#525252"/><rect x="8.5" y="30.79" width="2" height="0.7" fill="#525252"/><rect x="8.5" y="36.33" width="2" height="0.7" fill="#525252"/><rect x="7.0" y="41.87" width="3.5" height="0.7" fill="#525252"/><rect x="8.5" y="47.40" width="2" height="0.7" fill="#525252"/><rect x="8.5" y="52.94" width="2" height="0.7" fill="#525252"/><rect x="8.5" y="58.47" width="2" height="0.7" fill="#525252"/><rect x="8.5" y="64.01" width="2" height="0.7" fill="#525252"/><rect x="8.5" y="69.54" width="2" height="0.7" fill="#525252"/><rect x="0" y="75.03" width="10.5" height="0.9" fill="#707070"/><rect x="8.5" y="80.62" width="2" height="0.7" fill="#525252"/><rect x="8.5" y="86.15" width="2" height="0.7" fill="#525252"/><rect x="8.5" y="91.69" width="2" height="0.7" fill="#525252"/><rect x="8.5" y="97.22" width="2" height="0.7" fill="#525252"/><rect x="8.5" y="102.76" width="2" height="0.7" fill="#525252"/><rect x="7.0" y="108.30" width="3.5" height="0.7" fill="#525252"/><rect x="8.5" y="113.83" width="2" height="0.7" fill="#525252"/><rect x="8.5" y="119.37" width="2" height="0.7" fill="#525252"/><rect x="8.5" y="124.90" width="2" height="0.7" fill="#525252"/><rect x="8.5" y="130.44" width="2" height="0.7" fill="#525252"/><rect x="8.5" y="135.97" width="2" height="0.7" fill="#525252"/><rect x="0" y="141.46" width="10.5" height="0.9" fill="#707070"/><rect x="8.5" y="147.05" width="2" height="0.7" fill="#525252"/><rect x="8.5" y="152.58" width="2" height="0.7" fill="#525252"/><rect x="8.5" y="158.12" width="2" height="0.7" fill="#525252"/><rect x="8.5" y="163.65" width="2" height="0.7" fill="#525252"/><rect x="8.5" y="169.19" width="2" height="0.7" fill="#525252"/><rect x="7.0" y="174.73" width="3.5" height="0.7" fill="#525252"/><rect x="8.5" y="180.26" width="2" height="0.7" fill="#525252"/><rect x="8.5" y="185.80" width="2" height="0.7" fill="#525252"/><rect x="8.5" y="191.33" width="2" height="0.7" fill="#525252"/><rect x="8.5" y="196.87" width="2" height="0.7" fill="#525252"/><rect x="8.5" y="202.40" width="2" height="0.7" fill="#525252"/><rect x="0" y="207.89" width="10.5" height="0.9" fill="#707070"/><rect x="8.5" y="213.48" width="2" height="0.7" fill="#525252"/><rect x="8.5" y="219.01" width="2" height="0.7" fill="#525252"/><rect x="8.5" y="224.55" width="2" height="0.7" fill="#525252"/><rect x="8.5" y="230.08" width="2" height="0.7" fill="#525252"/><rect x="8.5" y="235.62" width="2" height="0.7" fill="#525252"/><rect x="7.0" y="241.16" width="3.5" height="0.7" fill="#525252"/><rect x="8.5" y="246.69" width="2" height="0.7" fill="#525252"/><rect x="8.5" y="252.23" width="2" height="0.7" fill="#525252"/><rect x="8.5" y="257.76" width="2" height="0.7" fill="#525252"/><rect x="8.5" y="263.30" width="2" height="0.7" fill="#525252"/><rect x="8.5" y="268.83" width="2" height="0.7" fill="#525252"/><rect x="0" y="274.32" width="10.5" height="0.9" fill="#707070"/><rect x="8.5" y="279.91" width="2" height="0.7" fill="#525252"/><rect x="8.5" y="285.44" width="2" height="0.7" fill="#525252"/><rect x="8.5" y="290.98" width="2" height="0.7" fill="#525252"/><rect x="8.5" y="296.51" width="2" height="0.7" fill="#525252"/><rect x="8.5" y="302.05" width="2" height="0.7" fill="#525252"/><rect x="7.0" y="307.59" width="3.5" height="0.7" fill="#525252"/><rect x="8.5" y="313.12" width="2" height="0.7" fill="#525252"/><rect x="8.5" y="318.66" width="2" height="0.7" fill="#525252"/><rect x="8.5" y="324.19" width="2" height="0.7" fill="#525252"/><rect x="8.5" y="329.73" width="2" height="0.7" fill="#525252"/><rect x="8.5" y="335.26" width="2" height="0.7" fill="#525252"/><rect x="0" y="340.75" width="10.5" height="0.9" fill="#707070"/><rect x="8.5" y="346.34" width="2" height="0.7" fill="#525252"/><rect x="8.5" y="351.87" width="2" height="0.7" fill="#525252"/><rect x="8.5" y="357.41" width="2" height="0.7" fill="#525252"/><rect x="8.5" y="362.94" width="2" height="0.7" fill="#525252"/><rect x="8.5" y="368.48" width="2" height="0.7" fill="#525252"/><rect x="7.0" y="374.01" width="3.5" height="0.7" fill="#525252"/><rect x="8.5" y="379.55" width="2" height="0.7" fill="#525252"/><rect x="8.5" y="385.09" width="2" height="0.7" fill="#525252"/><rect x="8.5" y="390.62" width="2" height="0.7" fill="#525252"/><rect x="8.5" y="396.16" width="2" height="0.7" fill="#525252"/><rect x="8.5" y="401.69" width="2" height="0.7" fill="#525252"/><rect x="0" y="407.18" width="10.5" height="0.9" fill="#707070"/><rect x="8.5" y="412.77" width="2" height="0.7" fill="#525252"/><rect x="8.5" y="418.30" width="2" height="0.7" fill="#525252"/><rect x="8.5" y="423.84" width="2" height="0.7" fill="#525252"/><rect x="8.5" y="429.37" width="2" height="0.7" fill="#525252"/><rect x="8.5" y="434.91" width="2" height="0.7" fill="#525252"/><rect x="7.0" y="440.45" width="3.5" height="0.7" fill="#525252"/><rect x="8.5" y="445.98" width="2" height="0.7" fill="#525252"/><rect x="8.5" y="451.52" width="2" height="0.7" fill="#525252"/><rect x="8.5" y="457.05" width="2" height="0.7" fill="#525252"/></svg>
<span class="t" style="left:28.6px;top:108.2px;font-size:5.6px;line-height:5.5px;color:#d8d8d8;font-weight:700;transform-origin:0 0;transform:rotate(-90deg);">72</span>
<span class="t" style="left:28.6px;top:179.9px;font-size:5.6px;line-height:5.5px;color:#d8d8d8;font-weight:700;transform-origin:0 0;transform:rotate(-90deg);">144</span>
<span class="t" style="left:28.6px;top:246.4px;font-size:5.6px;line-height:5.5px;color:#d8d8d8;font-weight:700;transform-origin:0 0;transform:rotate(-90deg);">216</span>
<span class="t" style="left:28.6px;top:312.8px;font-size:5.6px;line-height:5.5px;color:#d8d8d8;font-weight:700;transform-origin:0 0;transform:rotate(-90deg);">288</span>
<span class="t" style="left:28.6px;top:379.2px;font-size:5.6px;line-height:5.5px;color:#d8d8d8;font-weight:700;transform-origin:0 0;transform:rotate(-90deg);">360</span>
<span class="t" style="left:28.6px;top:445.7px;font-size:5.6px;line-height:5.5px;color:#d8d8d8;font-weight:700;transform-origin:0 0;transform:rotate(-90deg);">432</span>
<span class="t" style="left:28.6px;top:512.1px;font-size:5.6px;line-height:5.5px;color:#d8d8d8;font-weight:700;transform-origin:0 0;transform:rotate(-90deg);">504</span>
<div style="left:60.8px;top:87px;width:1px;height:459px;background:#a28fcd;"></div>
<div style="left:78px;top:172.5px;width:166px;height:20px;background:#a9c676;border-radius:0 5px 5px 0;z-index:0;"></div>
<svg style="left:65.5px;top:148.5px;" width="38" height="44" viewBox="0 0 38 44"><defs><linearGradient id="cg1b" x1="0.25" y1="0.3" x2="0.8" y2="0.85"><stop offset="0" stop-color="#ffffff"/><stop offset="0.55" stop-color="#f6f6f8"/><stop offset="0.8" stop-color="#d2d2d8"/><stop offset="1" stop-color="#a8a8b2"/></linearGradient>
<linearGradient id="ch1b" x1="0" y1="0" x2="1" y2="1"><stop offset="0" stop-color="#eeeeee"/><stop offset="1" stop-color="#d4d4d6"/></linearGradient></defs>
<path d="M0 43.5 C0.5 30 9 21 17 17.5 L13 14 L31 1.5 L32.5 2 C37.8 8.5 37.8 17.5 34.5 23.5 C29.5 33.5 20.5 40.5 13.5 43.5 Z" fill="url(#cg1b)"/>
<path d="M13 14 L31 1.5 L32.5 2 L35.2 6.5 L17 17.5 Z" fill="url(#ch1b)"/></svg>
<span class="t" style="transform:scaleX(0.9994);left:104.5px;top:172.55px;font-size:15px;line-height:19.5px;color:#fbfdf0;font-family:'Liberation Serif', serif;font-weight:700;">Learning Outcomes</span>
<span class="t" style="left:231px;top:178.6px;font-size:7.5px;line-height:9.8px;color:#4c8bd0;font-family:'Liberation Sans', sans-serif;font-weight:700;">#</span>
<div style="left:65.5px;top:192.5px;width:238.5px;height:125.5px;background:#fdeee4;border-radius:0 0 6px 6px;"></div>
<div style="left:77.5px;top:201.3px;width:4.5px;height:5.6px;background:#2f8fc2;border-radius:0.8px;"></div>
<span class="t" style="left:84.5px;top:201.15px;font-size:5px;line-height:6.5px;color:#4c8bd0;font-family:'Liberation Sans', sans-serif;">»</span>
<span class="t" style="transform:scaleX(1.0218);left:90.5px;top:196.75px;font-size:11px;line-height:14.3px;color:#1c1c1c;font-family:'Liberation Serif', serif;-webkit-text-stroke-width:0.3px;">Natural resources and their classification</span>
<span class="t" style="left:274.5px;top:200.45px;font-size:6.5px;line-height:8.5px;color:#4c8bd0;font-family:'Liberation Sans', sans-serif;font-weight:700;">¶</span>
<div style="left:77.5px;top:214.32000000000002px;width:4.5px;height:5.6px;background:#2f8fc2;border-radius:0.8px;"></div>
<span class="t" style="left:84.5px;top:214.17px;font-size:5px;line-height:6.5px;color:#4c8bd0;font-family:'Liberation Sans', sans-serif;">»</span>
<span class="t" style="transform:scaleX(1.0184);left:90.5px;top:209.77px;font-size:11px;line-height:14.3px;color:#1c1c1c;font-family:'Liberation Serif', serif;-webkit-text-stroke-width:0.3px;">Coal and its formation</span>
<span class="t" style="left:191.5px;top:213.47px;font-size:6.5px;line-height:8.5px;color:#4c8bd0;font-family:'Liberation Sans', sans-serif;font-weight:700;">¶</span>
<div style="left:77.5px;top:227.34px;width:4.5px;height:5.6px;background:#2f8fc2;border-radius:0.8px;"></div>
<span class="t" style="left:84.5px;top:227.19px;font-size:5px;line-height:6.5px;color:#4c8bd0;font-family:'Liberation Sans', sans-serif;">»</span>
<span class="t" style="transform:scaleX(1.0077);left:90.5px;top:222.79px;font-size:11px;line-height:14.3px;color:#1c1c1c;font-family:'Liberation Serif', serif;-webkit-text-stroke-width:0.3px;">Useful products obtained from coal</span>
<span class="t" style="left:248.0px;top:226.49px;font-size:6.5px;line-height:8.5px;color:#4c8bd0;font-family:'Liberation Sans', sans-serif;font-weight:700;">¶</span>
<div style="left:77.5px;top:240.36px;width:4.5px;height:5.6px;background:#2f8fc2;border-radius:0.8px;"></div>
<span class="t" style="left:84.5px;top:240.21px;font-size:5px;line-height:6.5px;color:#4c8bd0;font-family:'Liberation Sans', sans-serif;">»</span>
<span class="t" style="transform:scaleX(1.0158);left:90.5px;top:235.81px;font-size:11px;line-height:14.3px;color:#1c1c1c;font-family:'Liberation Serif', serif;-webkit-text-stroke-width:0.3px;">What is petroleum?</span>
<span class="t" style="left:178.5px;top:239.51px;font-size:6.5px;line-height:8.5px;color:#4c8bd0;font-family:'Liberation Sans', sans-serif;font-weight:700;">¶</span>
<div style="left:77.5px;top:253.38000000000002px;width:4.5px;height:5.6px;background:#2f8fc2;border-radius:0.8px;"></div>
<span class="t" style="left:84.5px;top:253.23px;font-size:5px;line-height:6.5px;color:#4c8bd0;font-family:'Liberation Sans', sans-serif;">»</span>
<span class="t" style="transform:scaleX(1.0201);left:90.5px;top:248.83px;font-size:11px;line-height:14.3px;color:#1c1c1c;font-family:'Liberation Serif', serif;-webkit-text-stroke-width:0.3px;">Occurrence and refining of petroleum</span>
<span class="t" style="left:260.5px;top:252.53px;font-size:6.5px;line-height:8.5px;color:#4c8bd0;font-family:'Liberation Sans', sans-serif;font-weight:700;">¶</span>
<div style="left:77.5px;top:266.4px;width:4.5px;height:5.6px;background:#2f8fc2;border-radius:0.8px;"></div>
<span class="t" style="left:84.5px;top:266.25px;font-size:5px;line-height:6.5px;color:#4c8bd0;font-family:'Liberation Sans', sans-serif;">»</span>
<span class="t" style="transform:scaleX(1.0112);left:90.5px;top:261.85px;font-size:11px;line-height:14.3px;color:#1c1c1c;font-family:'Liberation Serif', serif;-webkit-text-stroke-width:0.3px;">What is natural gas?</span>
<span class="t" style="left:181.5px;top:265.55px;font-size:6.5px;line-height:8.5px;color:#4c8bd0;font-family:'Liberation Sans', sans-serif;font-weight:700;">¶</span>
<div style="left:77.5px;top:279.41999999999996px;width:4.5px;height:5.6px;background:#2f8fc2;border-radius:0.8px;"></div>
<span class="t" style="left:84.5px;top:279.27px;font-size:5px;line-height:6.5px;color:#4c8bd0;font-family:'Liberation Sans', sans-serif;">»</span>
<span class="t" style="transform:scaleX(1.0088);left:90.5px;top:274.87px;font-size:11px;line-height:14.3px;color:#1c1c1c;font-family:'Liberation Serif', serif;-webkit-text-stroke-width:0.3px;">Pollution by combustion of fuels</span>
<span class="t" style="left:236.5px;top:278.57px;font-size:6.5px;line-height:8.5px;color:#4c8bd0;font-family:'Liberation Sans', sans-serif;font-weight:700;">¶</span>
<span class="t" style="left:76.5px;top:291.6px;font-size:6px;line-height:7.8px;color:#4c8bd0;font-family:'Liberation Sans', sans-serif;font-weight:700;">#</span>
<div style="left:344px;top:162.5px;width:166px;height:20.5px;background:#a9c676;border-radius:0 5px 5px 0;"></div>
<svg style="left:331px;top:139px;" width="38" height="44" viewBox="0 0 38 44"><defs><linearGradient id="cg2b" x1="0.25" y1="0.3" x2="0.8" y2="0.85"><stop offset="0" stop-color="#ffffff"/><stop offset="0.55" stop-color="#f6f6f8"/><stop offset="0.8" stop-color="#d2d2d8"/><stop offset="1" stop-color="#a8a8b2"/></linearGradient>
<linearGradient id="ch2b" x1="0" y1="0" x2="1" y2="1"><stop offset="0" stop-color="#eeeeee"/><stop offset="1" stop-color="#d4d4d6"/></linearGradient></defs>
<path d="M0 43.5 C0.5 30 9 21 17 17.5 L13 14 L31 1.5 L32.5 2 C37.8 8.5 37.8 17.5 34.5 23.5 C29.5 33.5 20.5 40.5 13.5 43.5 Z" fill="url(#cg2b)"/>
<path d="M13 14 L31 1.5 L32.5 2 L35.2 6.5 L17 17.5 Z" fill="url(#ch2b)"/></svg>
<div style="left:368.5px;top:164.5px;width:116.5px;height:16px;background:#f6cab9;"></div>
<span class="t" style="transform:scaleX(0.9658);left:370px;top:163.35px;font-size:14.5px;line-height:18.9px;color:#fdeae1;font-family:'Liberation Serif', serif;">Ponder and Proceed</span>
<span class="t" style="left:484.8px;top:167.65px;font-size:9px;line-height:11.7px;color:#4c8bd0;font-family:'Liberation Sans', sans-serif;font-weight:700;">#</span>
<div style="left:331px;top:183px;width:200px;height:135px;background:#fdeee4;border-radius:0 0 0 6px;"></div>
<div style="left:342.5px;top:191.70000000000002px;width:4.5px;height:5.6px;background:#2f8fc2;border-radius:0.8px;"></div>
<span class="t" style="left:350px;top:191.55px;font-size:5px;line-height:6.5px;color:#4c8bd0;font-family:'Liberation Sans', sans-serif;">»</span>
<div style="left:356px;top:187.3px;width:158.5px;height:14px;line-height:14px;font-size:11px;font-family:'Liberation Serif', serif;color:#1c1c1c;text-align:justify;text-align-last:justify;white-space:nowrap;-webkit-text-stroke-width:0.3px;">Why does the formation of fossil</div>
<span class="t" style="transform:scaleX(0.9832);left:356px;top:199.55px;font-size:11px;line-height:14.3px;color:#1c1c1c;font-family:'Liberation Serif', serif;-webkit-text-stroke-width:0.3px;">take millions of year?</span>
<span class="t" style="left:450.5px;top:203.25px;font-size:6.5px;line-height:8.5px;color:#4c8bd0;font-family:'Liberation Sans', sans-serif;font-weight:700;">¶</span>
<div style="left:342.5px;top:217.4px;width:4.5px;height:5.6px;background:#2f8fc2;border-radius:0.8px;"></div>
<span class="t" style="left:350px;top:217.25px;font-size:5px;line-height:6.5px;color:#4c8bd0;font-family:'Liberation Sans', sans-serif;">»</span>
<div style="left:356px;top:213.0px;width:154px;height:14px;line-height:14px;font-size:11px;font-family:'Liberation Serif', serif;color:#1c1c1c;text-align:justify;text-align-last:justify;white-space:nowrap;-webkit-text-stroke-width:0.3px;">Why is it advised to use petrol or</div>
<span class="t" style="left:513.5px;top:212.85px;font-size:11px;line-height:14.3px;color:#1c1c1c;font-family:'Liberation Serif', serif;-webkit-text-stroke-width:0.3px;">diesel</span>
<span class="t" style="transform:scaleX(0.9926);left:356px;top:225.45px;font-size:11px;line-height:14.3px;color:#1c1c1c;font-family:'Liberation Serif', serif;-webkit-text-stroke-width:0.3px;">(fossil fuels) carefully and wisely?</span>
<span class="t" style="left:507.5px;top:229.15px;font-size:6.5px;line-height:8.5px;color:#4c8bd0;font-family:'Liberation Sans', sans-serif;font-weight:700;">¶</span>
<div style="left:342.5px;top:243.4px;width:4.5px;height:5.6px;background:#2f8fc2;border-radius:0.8px;"></div>
<span class="t" style="left:350px;top:243.25px;font-size:5px;line-height:6.5px;color:#4c8bd0;font-family:'Liberation Sans', sans-serif;">»</span>
<div style="left:356px;top:239.0px;width:135px;height:14px;line-height:14px;font-size:11px;font-family:'Liberation Serif', serif;color:#1c1c1c;text-align:justify;text-align-last:justify;white-space:nowrap;-webkit-text-stroke-width:0.3px;">Can we use all our natural</div>
<span class="t" style="left:497.5px;top:238.85px;font-size:11px;line-height:14.3px;color:#1c1c1c;font-family:'Liberation Serif', serif;-webkit-text-stroke-width:0.3px;">resources</span>
<span class="t" style="transform:scaleX(0.9552);left:356px;top:251.25px;font-size:11px;line-height:14.3px;color:#1c1c1c;font-family:'Liberation Serif', serif;-webkit-text-stroke-width:0.3px;">forever?</span>
<span class="t" style="left:391.5px;top:255.3px;font-size:6px;line-height:7.8px;color:#4c8bd0;font-family:'Liberation Sans', sans-serif;font-weight:700;">#</span>
<div style="left:33px;top:195.5px;width:312px;height:1px;background:#5cc5d6;"></div>
<div style="left:345px;top:195.6px;width:175px;height:0.8px;background:rgba(70,150,170,0.55);"></div>
<span class="t" style="left:61.5px;top:320.45px;font-size:7px;line-height:9.1px;color:#4c8bd0;font-family:'Liberation Sans', sans-serif;font-weight:700;">¶</span>
<div style="left:66.3px;top:338px;width:384.7px;height:19px;background:#f8cfc1;"></div>
<span class="t" style="transform:scaleX(0.9659);left:67.8px;top:338.4px;font-size:15.2px;line-height:19.8px;color:#bd3d8e;font-family:'Liberation Sans', sans-serif;-webkit-text-stroke-width:0.2px;">natural resources or climate and patterns hand t</span>
<div style="left:379.8px;top:338.3px;width:10px;height:19px;background:#0b2f33;"></div>
<span class="t" style="transform:scaleX(0.7293);left:380.6px;top:338.4px;font-size:15.2px;line-height:19.8px;color:#56d39a;font-family:'Liberation Sans', sans-serif;">H</span>
<span class="t" style="transform:scaleX(0.9004);left:390.6px;top:338.4px;font-size:15.2px;line-height:19.8px;color:#bd3d8e;font-family:'Liberation Sans', sans-serif;-webkit-text-stroke-width:0.2px;">e chance</span>
<span class="t" style="left:448px;top:342.65px;font-size:11px;line-height:14.3px;color:#4a80bc;font-family:'Liberation Sans', sans-serif;font-weight:700;">¶</span>
<span class="t" style="transform:scaleX(1.0319);left:61.3px;top:362.05px;font-size:11.6px;line-height:15.1px;color:#1a1a1a;font-family:'Liberation Sans', sans-serif;-webkit-text-stroke-width:0.32px;">In our everyday life, we use various materials for our basic needs. Some of them are fo</span>
<span class="t" style="transform:scaleX(1.0619);left:61.3px;top:377.75px;font-size:11.6px;line-height:15.1px;color:#1a1a1a;font-family:'Liberation Sans', sans-serif;-webkit-text-stroke-width:0.32px;">in nature and some of them are man made. Air, water, soil and sunlight are obtained</span>
<span class="t" style="transform:scaleX(0.9813);left:61.3px;top:393.35px;font-size:11.6px;line-height:15.1px;color:#1a1a1a;font-family:'Liberation Sans', sans-serif;-webkit-text-stroke-width:0.32px;">nature, so they are called <b>natural resources</b>. Whereas, plastics, synthetic fibers, drugs, pa</span>
<span class="t" style="transform:scaleX(1.0178);left:61.3px;top:408.85px;font-size:11.6px;line-height:15.1px;color:#1a1a1a;font-family:'Liberation Sans', sans-serif;-webkit-text-stroke-width:0.32px;">etc., are man-made materials. <span style="position:static;color:#c9334f">dtptips_123@4test-net.com</span> this is test address</span>
<span class="t" style="left:467.5px;top:413.45px;font-size:7px;line-height:9.1px;color:#4c8bd0;font-family:'Liberation Sans', sans-serif;font-weight:700;">¶</span>
<span class="t" style="transform:scaleX(1.0223);left:61.3px;top:427.55px;font-size:11.6px;line-height:15.1px;color:#1a1a1a;font-family:'Liberation Sans', sans-serif;-webkit-text-stroke-width:0.32px;">mail at :</span>
<span class="t" style="left:104.5px;top:432.25px;font-size:7px;line-height:9.1px;color:#4c8bd0;font-family:'Liberation Sans', sans-serif;font-weight:700;">¶</span>
<span class="t" style="transform:scaleX(1.0250);left:61.3px;top:445.45px;font-size:11.6px;line-height:15.1px;color:#1a1a1a;font-family:'Liberation Sans', sans-serif;-webkit-text-stroke-width:0.32px;"><span style="position:static;color:#c9334f">dtptips@gmail.com</span> dsd</span>
<span class="t" style="left:186px;top:450.05px;font-size:7px;line-height:9.1px;color:#4c8bd0;font-family:'Liberation Sans', sans-serif;font-weight:700;">¶</span>
<span class="t" style="transform:scaleX(1.0159);left:61.3px;top:464.05px;font-size:11.6px;line-height:15.1px;color:#1a1a1a;font-family:'Liberation Sans', sans-serif;-webkit-text-stroke-width:0.32px;"><span style="position:static;color:#c9334f">dtptips_123@gmail.com</span> sds kk</span>
<span class="t" style="left:225.5px;top:468.65px;font-size:7px;line-height:9.1px;color:#4c8bd0;font-family:'Liberation Sans', sans-serif;font-weight:700;">¶</span>
<span class="t" style="transform:scaleX(1.0383);left:61.3px;top:482.55px;font-size:11.6px;line-height:15.1px;color:#c9334f;font-family:'Liberation Sans', sans-serif;-webkit-text-stroke-width:0.32px;">dtptips_123@test-net.com</span>
<span class="t" style="left:203px;top:487.15px;font-size:7px;line-height:9.1px;color:#4c8bd0;font-family:'Liberation Sans', sans-serif;font-weight:700;">¶</span>
<span class="t" style="transform:scaleX(1.0405);left:61.3px;top:500.65px;font-size:11.6px;line-height:15.1px;color:#c9334f;font-family:'Liberation Sans', sans-serif;-webkit-text-stroke-width:0.32px;">dtptips_123@test_net.com</span>
<span class="t" style="left:206px;top:505.25px;font-size:7px;line-height:9.1px;color:#4c8bd0;font-family:'Liberation Sans', sans-serif;font-weight:700;">¶</span>
<span class="t" style="left:61px;top:522.45px;font-size:7px;line-height:9.1px;color:#4c8bd0;font-family:'Liberation Sans', sans-serif;font-weight:700;">#</span>
<div style="left:519px;top:505px;width:298.5px;height:41px;background:#ffffff;"></div>
<div style="left:542.2px;top:505px;width:1px;height:41px;background:#dcaad6;"></div>
<div style="left:554.3px;top:505px;width:1px;height:41px;background:#86d3e2;"></div>
<div style="left:584.4px;top:505px;width:1.6px;height:41px;background:#1d1d1d;"></div>
<div style="left:600.5px;top:505px;width:1px;height:41px;background:#eaa0ad;"></div>
<div style="left:817.5px;top:505px;width:206.5px;height:51px;background:#474747;"></div>
<div style="left:998.5px;top:505px;width:25.5px;height:51px;background:#404040;"></div>
<div style="left:817.5px;top:530.5px;width:181px;height:0.8px;background:#3c3c3c;"></div>
<span class="t" style="transform:scaleX(0.9427);left:840px;top:518.45px;font-size:6.2px;line-height:8.1px;color:#e6e6e6;font-family:'Liberation Sans', sans-serif;font-weight:700;">NCERT Question</span>
<svg style="left:986px;top:523px;" width="10" height="6" viewBox="0 0 10 6"><path d="M3 1.5L5 3.5 7 1.5" fill="none" stroke="#8a8a8a" stroke-width="1"/></svg>
<svg style="left:821px;top:532px;" width="14" height="10" viewBox="0 0 14 10"><path d="M2 8.5h9.5a2 2 0 0 0 0-4 3 3 0 0 0-5.6-1A2.4 2.4 0 0 0 2 8.5z" fill="#6c6c6c"/></svg>
<svg style="left:919px;top:532px;" width="12" height="10" viewBox="0 0 12 10"><path d="M1 2h3.5l1 1.2H11V9H1z" fill="#cfcfcf"/></svg>
<span class="t" style="left:938px;top:532.95px;font-size:7px;line-height:9.1px;color:#707070;font-family:'Liberation Sans', sans-serif;font-weight:700;">¶</span>
<svg style="left:944px;top:534px;" width="6" height="6" viewBox="0 0 6 6"><path d="M1 3.2l1.5 1.6L5 1.2" fill="none" stroke="#707070" stroke-width="1"/></svg>
<svg style="left:956px;top:532px;" width="10" height="10" viewBox="0 0 10 10"><path d="M1 1.5h5.5v6H1z" fill="#cfcfcf"/><path d="M3.5 3.5H8.5v6H3.5z" fill="#cfcfcf" stroke="#474747" stroke-width="0.7"/></svg>
<svg style="left:974px;top:531.5px;" width="10" height="11" viewBox="0 0 10 11"><path d="M2.3 3.5h5.4l-0.5 6.3H2.8z" fill="#cfcfcf"/><path d="M1.5 2.6h7M4 1.5h2" stroke="#cfcfcf" stroke-width="1"/><path d="M4 5v3.5M6 5v3.5" stroke="#474747" stroke-width="0.6"/></svg>
<div style="left:817.5px;top:545.5px;width:206.5px;height:11px;background:#3a3a3a;"></div>
<div style="left:913px;top:546.5px;width:85px;height:9.5px;background:#484848;"></div>
<svg style="left:974px;top:548px;" width="12" height="8" viewBox="0 0 12 8"><path d="M1 1.5h9M1 4h9M1 6.5h9" stroke="#aaa" stroke-width="0.9"/></svg>
<div style="left:513px;top:50px;width:5.5px;height:461px;background:linear-gradient(90deg,rgba(0,0,0,0),rgba(0,0,0,0.10) 40%,rgba(0,0,0,0.34));"></div>
<div style="left:517.8px;top:49px;width:1px;height:461.5px;background:#3c444d;"></div>
<div style="left:516px;top:511px;width:508px;height:5px;background:linear-gradient(180deg,rgba(0,0,0,0.38),rgba(0,0,0,0.12) 50%,rgba(0,0,0,0));"></div>
<div style="left:518.5px;top:48.5px;width:506px;height:462.5px;border-radius:4px 0 0 5px;background:linear-gradient(180deg,#4b5a68 0px,#4b5a68 18px,#9db8d4 19px,#b7d0ea 60px,#c3d8ee 100%);"></div>
<div style="left:518.5px;top:48.5px;width:506px;height:1px;background:#8ea0b2;border-radius:4px 0 0 0;"></div>
<div style="left:518.5px;top:66px;width:4.5px;height:444px;background:linear-gradient(90deg,#8298ae 0,#d3dfea 28%,#e7eef5 60%,#c3d2e1 100%);"></div>
<div style="left:518.5px;top:49.5px;width:1px;height:16.5px;background:#6f8297;"></div>
<div style="left:519.5px;top:505px;width:298px;height:5.5px;border-radius:0 0 0 4px;background:linear-gradient(180deg,#9fbcd9,#c7dcf0 45%,#b4cde6);"></div>
<div style="left:817.5px;top:505px;width:206.5px;height:5.5px;background:linear-gradient(180deg,#7d8fa3 0,#c2cfdc 22%,#6c7f95 48%,#56677c 100%);"></div>
<div style="left:518.5px;top:510.2px;width:505.5px;height:0.9px;background:#4a5d72;"></div>
<div style="left:519.5px;top:49.5px;width:504.5px;height:16px;background:linear-gradient(180deg,#5a6c7f 0,#46586b 35%,#3e4f61 75%,#4a5c6f 100%);border-radius:3px 0 0 0;"></div>
<div style="left:519.5px;top:49.5px;width:504.5px;height:16px;background:linear-gradient(90deg,rgba(120,140,160,0) 30%,rgba(120,145,170,0.25) 55%,rgba(90,110,130,0) 75%);"></div>
<div style="left:519.5px;top:49.5px;width:100px;height:16px;border-radius:3px 0 0 0;background:linear-gradient(90deg,rgba(190,198,207,0.95) 0,rgba(176,186,196,0.92) 70%,rgba(150,164,178,0) 100%);"></div>
<span class="t" style="transform:scaleX(0.9159);left:523px;top:52.2px;font-size:8.3px;line-height:10.8px;color:#27313c;font-family:'Liberation Sans', sans-serif;">Paragraph Style Options</span>
<div style="left:523px;top:65.2px;width:501px;height:1.3px;background:#7d91a7;"></div>
<div style="left:523px;top:66.5px;width:501px;height:438.5px;background:#535353;"></div>
<div style="left:1017px;top:66.5px;width:5.2px;height:438.5px;background:#585858;"></div>
<div style="left:1022.2px;top:49.5px;width:1.8px;height:456px;background:#262a2e;"></div>
<div style="left:532.5px;top:72px;width:115px;height:313.5px;box-sizing:border-box;border:1px solid #595959;"></div>
<div style="left:533px;top:259px;width:113px;height:14px;background:#47678f;"></div>
<span class="t" style="transform:scaleX(0.9252);left:535.8px;top:79.6px;font-size:6.3px;line-height:8.2px;color:#f2f2f2;font-family:'Liberation Sans', sans-serif;font-weight:700;">General</span>
<span class="t" style="transform:scaleX(0.9122);left:535.8px;top:93.63px;font-size:6.3px;line-height:8.2px;color:#f2f2f2;font-family:'Liberation Sans', sans-serif;font-weight:700;">Basic Character Formats</span>
<span class="t" style="transform:scaleX(0.8845);left:535.8px;top:107.66px;font-size:6.3px;line-height:8.2px;color:#f2f2f2;font-family:'Liberation Sans', sans-serif;font-weight:700;">Advanced Character Formats</span>
<span class="t" style="transform:scaleX(0.9614);left:535.8px;top:121.69px;font-size:6.3px;line-height:8.2px;color:#f2f2f2;font-family:'Liberation Sans', sans-serif;font-weight:700;">Indents and Spacing</span>
<span class="t" style="transform:scaleX(0.9625);left:535.8px;top:135.72px;font-size:6.3px;line-height:8.2px;color:#f2f2f2;font-family:'Liberation Sans', sans-serif;font-weight:700;">Tabs</span>
<span class="t" style="transform:scaleX(0.9331);left:535.8px;top:149.75px;font-size:6.3px;line-height:8.2px;color:#f2f2f2;font-family:'Liberation Sans', sans-serif;font-weight:700;">Paragraph Rules</span>
<span class="t" style="transform:scaleX(0.9468);left:535.8px;top:163.78px;font-size:6.3px;line-height:8.2px;color:#f2f2f2;font-family:'Liberation Sans', sans-serif;font-weight:700;">Paragraph Border</span>
<span class="t" style="transform:scaleX(0.9561);left:535.8px;top:177.81px;font-size:6.3px;line-height:8.2px;color:#f2f2f2;font-family:'Liberation Sans', sans-serif;font-weight:700;">Paragraph Shading</span>
<span class="t" style="transform:scaleX(0.9038);left:535.8px;top:191.84px;font-size:6.3px;line-height:8.2px;color:#f2f2f2;font-family:'Liberation Sans', sans-serif;font-weight:700;">Keep Options</span>
<span class="t" style="transform:scaleX(0.9229);left:535.8px;top:205.87px;font-size:6.3px;line-height:8.2px;color:#f2f2f2;font-family:'Liberation Sans', sans-serif;font-weight:700;">Hyphenation</span>
<span class="t" style="transform:scaleX(0.8627);left:535.8px;top:219.9px;font-size:6.3px;line-height:8.2px;color:#f2f2f2;font-family:'Liberation Sans', sans-serif;font-weight:700;">Justification</span>
<span class="t" style="transform:scaleX(0.9117);left:535.8px;top:233.93px;font-size:6.3px;line-height:8.2px;color:#f2f2f2;font-family:'Liberation Sans', sans-serif;font-weight:700;">Span Columns</span>
<span class="t" style="transform:scaleX(0.9449);left:535.8px;top:247.96px;font-size:6.3px;line-height:8.2px;color:#f2f2f2;font-family:'Liberation Sans', sans-serif;font-weight:700;">Drop Caps and Nested Styles</span>
<span class="t" style="transform:scaleX(0.9031);left:535.8px;top:261.99px;font-size:6.3px;line-height:8.2px;color:#f2f2f2;font-family:'Liberation Sans', sans-serif;font-weight:700;">GREP Style</span>
<span class="t" style="transform:scaleX(0.9387);left:535.8px;top:276.02px;font-size:6.3px;line-height:8.2px;color:#f2f2f2;font-family:'Liberation Sans', sans-serif;font-weight:700;">Bullets and Numbering</span>
<span class="t" style="transform:scaleX(0.9035);left:535.8px;top:290.05px;font-size:6.3px;line-height:8.2px;color:#f2f2f2;font-family:'Liberation Sans', sans-serif;font-weight:700;">Character Color</span>
<span class="t" style="transform:scaleX(0.9464);left:535.8px;top:304.08px;font-size:6.3px;line-height:8.2px;color:#f2f2f2;font-family:'Liberation Sans', sans-serif;font-weight:700;">OpenType Features</span>
<span class="t" style="transform:scaleX(0.9289);left:535.8px;top:318.11px;font-size:6.3px;line-height:8.2px;color:#f2f2f2;font-family:'Liberation Sans', sans-serif;font-weight:700;">Underline Options</span>
<span class="t" style="transform:scaleX(0.9307);left:535.8px;top:332.14px;font-size:6.3px;line-height:8.2px;color:#f2f2f2;font-family:'Liberation Sans', sans-serif;font-weight:700;">Strikethrough Options</span>
<span class="t" style="transform:scaleX(0.9558);left:535.8px;top:346.17px;font-size:6.3px;line-height:8.2px;color:#f2f2f2;font-family:'Liberation Sans', sans-serif;font-weight:700;">Export Tagging</span>
<span class="t" style="transform:scaleX(1.0857);left:768px;top:79.3px;font-size:6.6px;line-height:8.6px;color:#e6e6e6;font-family:'Liberation Sans', sans-serif;">Style Name:</span>
<div style="left:813.5px;top:77.5px;width:162px;height:12px;background:#4e4e4e;box-sizing:border-box;border:1px solid #606060;border-radius:1px;"></div>
<span class="t" style="transform:scaleX(1.0492);left:817px;top:79.4px;font-size:6.8px;line-height:8.8px;color:#ececec;font-family:'Liberation Sans', sans-serif;">Head 1</span>
<div style="left:652.5px;top:126.2px;width:352px;height:181.5px;box-sizing:border-box;border:1px solid #5f81b1;"></div>
<div style="left:652.5px;top:313px;width:72px;height:16.5px;box-sizing:border-box;border:1px solid #cfcfcf;border-radius:8.5px;"></div>
<span class="t" style="transform:scaleX(0.9505);left:659.5px;top:315.75px;font-size:7.8px;line-height:10.1px;color:#f4f4f4;font-family:'Liberation Sans', sans-serif;">New GREP Style</span>
<div style="left:674.5px;top:325.3px;width:5px;height:0.7px;background:#e8e8e8;"></div>
<div style="left:731px;top:314.5px;width:54.5px;height:14.5px;background:#595959;border-radius:7.5px;"></div>
<span class="t" style="transform:scaleX(1.0292);left:747px;top:316.2px;font-size:7.4px;line-height:9.6px;color:#727272;font-family:'Liberation Sans', sans-serif;">Delete</span>
<svg style="left:970px;top:316px;" width="8" height="7" viewBox="0 0 8 7"><path d="M1.2 6L4 1l2.8 5z" fill="#b4b4b4"/></svg>
<svg style="left:989.5px;top:316px;" width="8" height="7" viewBox="0 0 8 7"><path d="M1.2 1L4 6l2.8-5z" fill="#b4b4b4"/></svg>
<div style="left:533.2px;top:478.2px;width:7.8px;height:8.3px;background:#d9d9d9;border-radius:1.2px;"></div>
<svg style="left:533.2px;top:478.2px;" width="8" height="8.3" viewBox="0 0 8 8.3"><path d="M1.8 4.2L3.4 5.9 6.2 2.2" fill="none" stroke="#444" stroke-width="1.2"/></svg>
<span class="t" style="transform:scaleX(1.0343);left:545.3px;top:477.7px;font-size:7.4px;line-height:9.6px;color:#f0f0f0;font-family:'Liberation Sans', sans-serif;">Preview</span>
<div style="left:545.3px;top:487.2px;width:4px;height:0.7px;background:#e0e0e0;"></div>
<div style="left:966px;top:476.3px;width:70px;height:16.8px;box-sizing:border-box;border:1.5px solid #ececec;border-radius:8.5px;"></div>
<span class="t" style="transform:scaleX(0.9409);left:991.2px;top:479.15px;font-size:7.8px;line-height:10.1px;color:#f4f4f4;font-family:'Liberation Sans', sans-serif;">OK</span>
<div style="left:612.1px;top:81.5px;width:222.4px;height:140px;background:#535353;border-radius:13px;box-shadow:0.9px 1.3px 1.3px rgba(0,0,0,0.62);"></div>
<div style="left:618.1px;top:87.5px;width:210.4px;height:92px;background:#525252;border-radius:8px 8px 0 0;"></div>
<div style="left:618.1px;top:171.1px;width:210.4px;height:44.400000000000006px;background:#565656;border-radius:0 0 8px 8px;"></div>
<div style="left:618.1px;top:87.5px;width:210.4px;height:12.5px;background:#555352;border-radius:8px 8px 0 0;"></div>
<div style="left:612.1px;top:81.5px;width:222.4px;height:140px;box-sizing:border-box;border:1.4px solid #9e9e9e;border-radius:13px;"></div>
<div style="left:613.4px;top:82.8px;width:219.8px;height:137.4px;box-sizing:border-box;border:2.6px solid #dedede;border-radius:11.7px;"></div>
<div style="left:615.9px;top:85.3px;width:214.8px;height:132.4px;box-sizing:border-box;border:1.3px solid #8e8e8e;border-radius:9.2px;"></div>
<div style="left:617.1px;top:86.5px;width:212.4px;height:130.0px;box-sizing:border-box;border:1.5px solid #1b1b1b;border-radius:8.2px;box-shadow:inset -1.3px -2.2px 1.8px rgba(0,0,0,0.6);"></div>
<div style="left:618.8000000000001px;top:88.8px;width:208.4px;height:125px;box-sizing:border-box;border-top:2.9px solid #b4b4b4;border-left:3.1px solid #b4b4b4;border-right:0 solid transparent;border-bottom:0 solid transparent;border-radius:7px 0 0 0;"></div>
<div style="left:622.7px;top:99.1px;width:204.5px;height:2.3px;background:#5d83b1;"></div>
<div style="left:622.7px;top:98.6px;width:204.5px;height:0.6px;background:#4c6380;"></div>
<div style="left:622.7px;top:101.3px;width:204.5px;height:0.6px;background:#4c6380;"></div>
<div style="left:622px;top:170.8px;width:205.5px;height:0.8px;background:#606060;"></div>
<span class="t" style="transform:scaleX(0.9789);left:625.6px;top:110.6px;font-size:16px;line-height:20.8px;color:#e4e4e4;font-family:'Liberation Sans', sans-serif;-webkit-text-stroke-width:0.3px;">Apply Style:</span>
<span class="t" style="transform:scaleX(0.9406);left:718.1px;top:110.6px;font-size:16px;line-height:20.8px;color:#e4e4e4;font-family:'Liberation Sans', sans-serif;-webkit-text-stroke-width:0.3px;">Upper Case</span>
<span class="t" style="transform:scaleX(1.0575);left:650.3px;top:143.5px;font-size:16px;line-height:20.8px;color:#e4e4e4;font-family:'Liberation Sans', sans-serif;-webkit-text-stroke-width:0.3px;">To Text:</span>
<span class="t" style="transform:scaleX(1.1128);left:719.2px;top:143.5px;font-size:16px;line-height:20.8px;color:#e4e4e4;font-family:'Liberation Sans', sans-serif;-webkit-text-stroke-width:0.3px;">\&lt;.(?!)</span>
<svg style="left:868px;top:41px;" width="120" height="44" viewBox="0 0 120 44">
<defs><clipPath id="lc1"><circle cx="40.25" cy="19.6" r="17"/></clipPath><clipPath id="lc2"><circle cx="71.1" cy="19.6" r="17.3"/></clipPath></defs>
<rect x="2.25" y="11.75" width="9.35" height="8.4" fill="#29b1e6"/><rect x="12.5" y="11.75" width="10.4" height="8.4" fill="#e8298f"/>
<rect x="2.25" y="21.4" width="9.35" height="9.4" fill="#f4e32d"/><rect x="12.5" y="21.4" width="10.4" height="9.4" fill="#2b2b2b"/>
<circle cx="40.25" cy="19.6" r="17" fill="#1fa8e6"/>
<circle cx="71.1" cy="19.6" r="17.3" fill="#ee2a93"/>
<circle cx="101.4" cy="19.6" r="16.6" fill="#f7e61e"/>
<circle cx="71.1" cy="19.6" r="17.3" fill="#1b1b8f" clip-path="url(#lc1)"/>
<circle cx="101.4" cy="19.6" r="16.6" fill="#e6281e" clip-path="url(#lc2)"/>
<rect x="1" y="32.6" width="115.8" height="10" fill="#4143a6"/>
<text x="96.4" y="32.2" font-family="Liberation Sans,sans-serif" font-weight="700" font-size="28" fill="#8f8c2e" textLength="16.5" lengthAdjust="spacingAndGlyphs">P</text>
<text x="31.4" y="31" font-family="Liberation Sans,sans-serif" font-weight="700" font-size="28" fill="#ffffff" textLength="18.6" lengthAdjust="spacingAndGlyphs">D</text>
<text x="61" y="31" font-family="Liberation Sans,sans-serif" font-weight="700" font-size="28" fill="#ffffff" textLength="20" lengthAdjust="spacingAndGlyphs">T</text>
<text x="94.9" y="31" font-family="Liberation Sans,sans-serif" font-weight="700" font-size="28" fill="#ffffff" textLength="16.5" lengthAdjust="spacingAndGlyphs">P</text>
<text x="3.8" y="40.4" font-family="Liberation Sans,sans-serif" font-weight="700" font-size="9.8" fill="#f4f4ff" textLength="111" lengthAdjust="spacingAndGlyphs">desktop publishing tips</text>
</svg>
<div style="left:0px;top:545.5px;width:27px;height:11px;background:#4a4a4a;"></div>
<div style="left:27px;top:545.5px;width:485px;height:10.5px;background:#3d3d3d;"></div>
<div style="left:512px;top:545.5px;width:138px;height:10.5px;background:#343434;"></div>
<div style="left:650px;top:545.5px;width:167.5px;height:10.5px;background:#5f5f58;"></div>
<svg style="left:35px;top:546.5px;" width="8" height="8" viewBox="0 0 8 8"><path d="M2 1.5v5" stroke="#666" stroke-width="1"/><path d="M6.5 1.5L3 4l3.5 2.5z" fill="#666"/></svg>
<svg style="left:48px;top:546.5px;" width="8" height="8" viewBox="0 0 8 8"><path d="M5.8 1.5L2.3 4l3.5 2.5z" fill="#666"/></svg>
<div style="left:61.5px;top:546.5px;width:44px;height:8.5px;background:#353535;box-sizing:border-box;border:0.8px solid #505050;"></div>
<span class="t" style="transform:scaleX(0.8995);left:63.8px;top:547.05px;font-size:5.8px;line-height:7.5px;color:#e8e8e8;font-family:'Liberation Sans', sans-serif;font-weight:700;">103</span>
<div style="left:106px;top:546.5px;width:13px;height:8.5px;background:#3f3f3f;box-sizing:border-box;border:0.8px solid #505050;"></div>
<svg style="left:109px;top:548px;" width="8" height="6" viewBox="0 0 8 6"><path d="M2 1.8L4 3.8 6 1.8" fill="none" stroke="#bbb" stroke-width="1"/></svg>
<svg style="left:124px;top:546.5px;" width="8" height="8" viewBox="0 0 8 8"><path d="M2.3 1.5L5.8 4 2.3 6.5z" fill="#d0d0d0"/></svg>
<svg style="left:137px;top:546.5px;" width="9" height="8" viewBox="0 0 9 8"><path d="M1.5 1.5L5 4 1.5 6.5z" fill="#d0d0d0"/><path d="M6.3 1.5v5" stroke="#d0d0d0" stroke-width="1.1"/></svg>
<svg style="left:154px;top:545.8px;" width="12" height="10" viewBox="0 0 12 10"><path d="M2 8.5A3.6 3.6 0 1 1 8.6 8.5" fill="none" stroke="#cfcfcf" stroke-width="1.4"/><path d="M5.3 5.2v3.3" stroke="#cfcfcf" stroke-width="1.1"/><path d="M9.5 8.2h2v1.5z" fill="#bbb"/></svg>
<span class="t" style="transform:scaleX(1.0006);left:175.8px;top:546.8px;font-size:6px;line-height:7.8px;color:#e6e6e6;font-family:'Liberation Sans', sans-serif;font-weight:700;">[Basic] (working)</span>
<svg style="left:240px;top:548px;" width="8" height="6" viewBox="0 0 8 6"><path d="M2 1.8L4 3.8 6 1.8" fill="none" stroke="#bbb" stroke-width="1"/></svg>
<div style="left:255.5px;top:547.2px;width:6.6px;height:6.6px;background:#e3202c;border-radius:50%;"></div>
<span class="t" style="transform:scaleX(0.9538);left:266.5px;top:546.8px;font-size:6px;line-height:7.8px;color:#e6e6e6;font-family:'Liberation Sans', sans-serif;font-weight:700;">12 errors</span>
<svg style="left:304.5px;top:548px;" width="8" height="6" viewBox="0 0 8 6"><path d="M2 1.8L4 3.8 6 1.8" fill="none" stroke="#bbb" stroke-width="1"/></svg>
<svg style="left:316.5px;top:547px;" width="6" height="8" viewBox="0 0 6 8"><path d="M4.2 1.2L1.8 4l2.4 2.8" fill="none" stroke="#666" stroke-width="1"/></svg>
<div style="left:0px;top:555.8px;width:1024px;height:18.2px;background:linear-gradient(180deg,#6f9fc9 0,#4783b8 10%,#3a78b0 48%,#2f6ca6 55%,#3474ad 100%);"></div>
<div style="left:0px;top:555.6px;width:1024px;height:0.8px;background:#22384e;"></div>
<div style="left:867.5px;top:555.8px;width:156.5px;height:18.2px;background:linear-gradient(180deg,#4d7db0 0,#2a5a94 12%,#214f88 50%,#1d487f 100%);"></div>
<svg style="left:4px;top:552px;" width="30" height="24" viewBox="0 0 30 24"><defs><radialGradient id="orb" cx="0.5" cy="0.4" r="0.65"><stop offset="0" stop-color="#5fb2e6"/><stop offset="0.6" stop-color="#1f66b0"/><stop offset="1" stop-color="#0d3568"/></radialGradient>
<radialGradient id="orb2" cx="0.5" cy="1" r="0.6"><stop offset="0" stop-color="#55e0ff" stop-opacity="0.9"/><stop offset="1" stop-color="#55e0ff" stop-opacity="0"/></radialGradient></defs>
<circle cx="14.4" cy="13.5" r="12" fill="url(#orb)" stroke="#8fbbe0" stroke-width="0.9"/>
<circle cx="14.4" cy="13.5" r="11.5" fill="url(#orb2)"/>
<path d="M8.3 9.2c1.9-1.1 3.6-1 5.3 0l-1 3.9c-1.7-1-3.4-1.1-5.3 0z" fill="#f0602a"/>
<path d="M14.7 9.8c1.8 1 3.5 1 5.3 0l-1 3.9c-1.8 1-3.5 1-5.3 0z" fill="#84c744"/>
<path d="M7 14.2c1.9-1.1 3.6-1 5.3 0l-1 3.9c-1.7-1-3.4-1.1-5.3 0z" fill="#46a8ea"/>
<path d="M13.4 14.8c1.8 1 3.5 1 5.3 0l-1 3.9c-1.8 1-3.5 1-5.3 0z" fill="#fbc823"/></svg>
<div style="left:39.2px;top:556.4px;width:42.6px;height:17.3px;box-sizing:border-box;border:0.6px solid rgba(170,205,235,0.35);border-radius:1.5px;background:linear-gradient(180deg,#7db1da 0,#68a2d0 45%,#5592c6 55%,#5e9bcc 100%);"></div>
<svg style="left:43.2px;top:561px;" width="9" height="10" viewBox="0 0 9 10"><path d="M0.8 0.5h5l2.2 2.2V9.5H0.8z" fill="#f2f2f2"/><rect x="2" y="5" width="3.4" height="2.6" fill="#d44"/></svg>
<span class="t" style="transform:scaleX(0.8914);left:55.5px;top:559.85px;font-size:8.4px;line-height:10.9px;color:#ffffff;font-family:'Liberation Sans', sans-serif;">Doc...</span>
<div style="left:82px;top:556.4px;width:41px;height:17.3px;box-sizing:border-box;border:0.6px solid rgba(170,205,235,0.35);border-radius:1.5px;background:linear-gradient(180deg,#7db1da 0,#68a2d0 45%,#5592c6 55%,#5e9bcc 100%);"></div>
<svg style="left:86px;top:561px;" width="9" height="10" viewBox="0 0 9 10"><rect x="0.5" y="0.5" width="7.5" height="9" fill="#e9c437"/><rect x="3.4" y="0.5" width="1.6" height="9" fill="#fff6c2"/></svg>
<span class="t" style="transform:scaleX(0.8543);left:98px;top:559.85px;font-size:8.4px;line-height:10.9px;color:#ffffff;font-family:'Liberation Sans', sans-serif;">MO...</span>
<svg style="left:130.5px;top:560.5px;" width="10" height="11" viewBox="0 0 10 11"><rect x="0.5" y="0.5" width="9" height="10" rx="1.5" fill="#f2a33a"/><path d="M3.5 3L7 5.5 3.5 8z" fill="#fff"/></svg>
<div style="left:149.6px;top:556.4px;width:42.2px;height:17.3px;box-sizing:border-box;border:0.6px solid rgba(170,205,235,0.35);border-radius:1.5px;background:linear-gradient(180deg,#7db1da 0,#68a2d0 45%,#5592c6 55%,#5e9bcc 100%);"></div>
<svg style="left:153.1px;top:559.3px;" width="13" height="13" viewBox="0 0 13 13"><circle cx="6.5" cy="6.5" r="5.8" fill="#f7a51f"/><path d="M1 6C1.2 2.6 4.5 0.4 8 1 6 1.6 5 3 5.2 4.6 3.6 5.4 3 7.6 4 9.6 2 9.4 0.8 8 1 6z" fill="#e5393b"/><path d="M2.2 9.5C4 12.5 9 13 11.4 9.5 9.5 10.8 5 11 2.2 9.5z" fill="#ef6a2a"/><circle cx="6.9" cy="6.6" r="3" fill="#5d38ba"/></svg>
<span class="t" style="transform:scaleX(0.8721);left:166px;top:559.85px;font-size:8.4px;line-height:10.9px;color:#ffffff;font-family:'Liberation Sans', sans-serif;">Cha...</span>
<div style="left:192px;top:556.4px;width:42.3px;height:17.3px;box-sizing:border-box;border:0.6px solid rgba(170,205,235,0.35);border-radius:1.5px;background:linear-gradient(180deg,#7db1da 0,#68a2d0 45%,#5592c6 55%,#5e9bcc 100%);"></div>
<svg style="left:195.5px;top:559.3px;" width="13" height="13" viewBox="0 0 13 13"><circle cx="6.5" cy="6.5" r="5.8" fill="#f7a51f"/><path d="M1 6C1.2 2.6 4.5 0.4 8 1 6 1.6 5 3 5.2 4.6 3.6 5.4 3 7.6 4 9.6 2 9.4 0.8 8 1 6z" fill="#e5393b"/><path d="M2.2 9.5C4 12.5 9 13 11.4 9.5 9.5 10.8 5 11 2.2 9.5z" fill="#ef6a2a"/><circle cx="6.9" cy="6.6" r="3" fill="#5d38ba"/></svg>
<span class="t" style="transform:scaleX(0.7955);left:208.5px;top:559.85px;font-size:8.4px;line-height:10.9px;color:#ffffff;font-family:'Liberation Sans', sans-serif;">GRE...</span>
<div style="left:234.5px;top:556.4px;width:42.3px;height:17.3px;box-sizing:border-box;border:0.6px solid rgba(170,205,235,0.35);border-radius:1.5px;background:linear-gradient(180deg,#7db1da 0,#68a2d0 45%,#5592c6 55%,#5e9bcc 100%);"></div>
<svg style="left:238.0px;top:559.3px;" width="13" height="13" viewBox="0 0 13 13"><circle cx="6.5" cy="6.5" r="5.8" fill="#f7a51f"/><path d="M1 6C1.2 2.6 4.5 0.4 8 1 6 1.6 5 3 5.2 4.6 3.6 5.4 3 7.6 4 9.6 2 9.4 0.8 8 1 6z" fill="#e5393b"/><path d="M2.2 9.5C4 12.5 9 13 11.4 9.5 9.5 10.8 5 11 2.2 9.5z" fill="#ef6a2a"/><circle cx="6.9" cy="6.6" r="3" fill="#5d38ba"/></svg>
<span class="t" style="transform:scaleX(0.8512);left:250.5px;top:559.85px;font-size:8.4px;line-height:10.9px;color:#ffffff;font-family:'Liberation Sans', sans-serif;">InDe...</span>
<div style="left:277px;top:556.4px;width:40.8px;height:17.3px;box-sizing:border-box;border:0.6px solid rgba(170,205,235,0.35);border-radius:1.5px;background:linear-gradient(180deg,#7db1da 0,#68a2d0 45%,#5592c6 55%,#5e9bcc 100%);"></div>
<svg style="left:280.5px;top:559.3px;" width="13" height="13" viewBox="0 0 13 13"><circle cx="6.5" cy="6.5" r="5.8" fill="#f7a51f"/><path d="M1 6C1.2 2.6 4.5 0.4 8 1 6 1.6 5 3 5.2 4.6 3.6 5.4 3 7.6 4 9.6 2 9.4 0.8 8 1 6z" fill="#e5393b"/><path d="M2.2 9.5C4 12.5 9 13 11.4 9.5 9.5 10.8 5 11 2.2 9.5z" fill="#ef6a2a"/><circle cx="6.9" cy="6.6" r="3" fill="#5d38ba"/></svg>
<span class="t" style="transform:scaleX(0.8805);left:293px;top:559.85px;font-size:8.4px;line-height:10.9px;color:#ffffff;font-family:'Liberation Sans', sans-serif;">0.00...</span>
<svg style="left:327.5px;top:561px;" width="10" height="10" viewBox="0 0 10 10"><circle cx="5" cy="5" r="4.6" fill="#e9eef2"/><path d="M5 0.4A4.6 4.6 0 0 1 9 2.8H5z" fill="#dd4b3e"/><path d="M0.9 2.9L3 6.4 5 9.6A4.6 4.6 0 0 1 0.9 2.9z" fill="#1da261"/><path d="M9 2.8A4.6 4.6 0 0 1 5 9.6L7 6z" fill="#fbc116"/><circle cx="5" cy="5" r="1.9" fill="#4a8af4"/></svg>
<svg style="left:350.5px;top:560.5px;" width="11" height="11" viewBox="0 0 11 11"><rect x="0.5" y="0.5" width="10" height="10" rx="1" fill="#3fae49"/><path d="M2.5 2l6 7M4.5 2l4 5" stroke="#eaf7ea" stroke-width="1.3"/></svg>
<svg style="left:374px;top:560.5px;" width="11" height="11" viewBox="0 0 11 11"><ellipse cx="5" cy="4.6" rx="4.3" ry="3.7" fill="#e9e3d8"/><circle cx="3.4" cy="3.8" r="0.9" fill="#d8442f"/><circle cx="5.8" cy="3" r="0.9" fill="#3a7ad8"/><path d="M6 6l3 3.8" stroke="#7a4a20" stroke-width="1.3"/></svg>
<svg style="left:397.5px;top:560.5px;" width="11" height="11" viewBox="0 0 11 11"><rect x="0.5" y="0.5" width="10" height="10" fill="#0d1b6b" stroke="#6aa0e8" stroke-width="0.8"/><text x="1.8" y="8" font-size="6" font-weight="700" fill="#8fc2ff" font-family="Liberation Sans,sans-serif">Ps</text></svg>
<div style="left:417px;top:556.4px;width:40px;height:17.3px;box-sizing:border-box;border:0.6px solid rgba(170,205,235,0.35);border-radius:1.5px;background:linear-gradient(180deg,#7db1da 0,#68a2d0 45%,#5592c6 55%,#5e9bcc 100%);"></div>
<svg style="left:421px;top:561px;" width="10" height="10" viewBox="0 0 10 10"><circle cx="5" cy="5" r="4.5" fill="#8fb7d8"/><circle cx="5" cy="5.5" r="2.6" fill="#e8b43a"/></svg>
<span class="t" style="transform:scaleX(0.9175);left:432.5px;top:559.85px;font-size:8.4px;line-height:10.9px;color:#ffffff;font-family:'Liberation Sans', sans-serif;">Tele...</span>
<svg style="left:463px;top:560px;" width="9" height="12" viewBox="0 0 9 12"><rect x="1.5" y="1" width="9" height="10" fill="#4a0a2a" stroke="#e0407a" stroke-width="0.8"/></svg>
<div style="left:868.3px;top:556.4px;width:29px;height:17.3px;box-sizing:border-box;border:0.7px solid rgba(150,190,230,0.5);border-radius:1.5px;background:linear-gradient(180deg,#4f86bd 0,#386fa8 45%,#2b5f98 55%,#3469a2 100%);"></div>
<span class="t" style="transform:scaleX(0.8415);left:872.5px;top:559.95px;font-size:8.2px;line-height:10.7px;color:#ffffff;font-family:'Liberation Sans', sans-serif;">Rec...</span>
<svg style="left:903px;top:562.5px;" width="7" height="6" viewBox="0 0 7 6"><path d="M1 5L3.5 1.3 6 5z" fill="#f0f0f0"/></svg>
<svg style="left:917px;top:560px;" width="9" height="11" viewBox="0 0 9 11"><rect x="1" y="2" width="6.5" height="8" fill="#e8e8e8"/><rect x="2.6" y="0.8" width="3.3" height="2" fill="#bdbdbd"/><path d="M4.5 4v4.5" stroke="#333" stroke-width="1.6"/></svg>
<svg style="left:932.5px;top:560.5px;" width="11" height="10" viewBox="0 0 11 10"><rect x="3" y="1.5" width="7" height="5.5" fill="none" stroke="#f0f0f0" stroke-width="1.1"/><rect x="0.8" y="4" width="3" height="4.2" fill="#f0f0f0"/><path d="M4 8.6h5.5" stroke="#f0f0f0" stroke-width="1"/></svg>
<svg style="left:947.5px;top:560.5px;" width="11" height="10" viewBox="0 0 11 10"><path d="M1 3.6h2L6 1v8L3 6.4H1z" fill="#f4f4f4"/><path d="M7.3 3.2a2.6 2.6 0 0 1 0 3.6M8.7 2a4.4 4.4 0 0 1 0 6" fill="none" stroke="#f4f4f4" stroke-width="0.8"/></svg>
<span class="t" style="transform:scaleX(0.9192);left:971.3px;top:561.15px;font-size:7.8px;line-height:10.1px;color:#ffffff;font-family:'Liberation Sans', sans-serif;">9:01 PM</span>
<div style="left:1008px;top:556.2px;width:16px;height:17.6px;box-sizing:border-box;border-left:1px solid rgba(255,255,255,0.35);background:linear-gradient(180deg,rgba(120,160,210,0.5),rgba(50,95,155,0.35) 50%,rgba(30,70,135,0.3));"></div>
<div style="left:0px;top:573.8px;width:1024px;height:2.2px;background:#0c0c12;"></div>
<div style="left:471px;top:548.8px;width:396.5px;height:2.2px;background:#303028;"></div>
<div style="left:471px;top:550.5px;width:396.5px;height:25.5px;background:#f6e82c;"></div>
<div style="left:471px;top:573.9px;width:396.5px;height:2.1px;background:#2e2e22;"></div>
<span class="t" style="transform:scaleX(0.9825);left:476px;top:554.55px;font-size:15.8px;line-height:20.5px;color:#2e2e18;font-family:'Liberation Sans', sans-serif;font-weight:700;-webkit-text-stroke-width:0.3px;">Visit</span>
<span class="t" style="transform:scaleX(0.9828);left:514px;top:554.55px;font-size:15.8px;line-height:20.5px;color:#dc5419;font-family:'Liberation Sans', sans-serif;font-weight:700;-webkit-text-stroke-width:0.3px;">DTPTIPS.com</span>
<span class="t" style="transform:scaleX(0.9973);left:622px;top:554.55px;font-size:15.8px;line-height:20.5px;color:#2e2e18;font-family:'Liberation Sans', sans-serif;font-weight:700;-webkit-text-stroke-width:0.3px;">for more detailed tips and tricks</span>
</div></body></html>
